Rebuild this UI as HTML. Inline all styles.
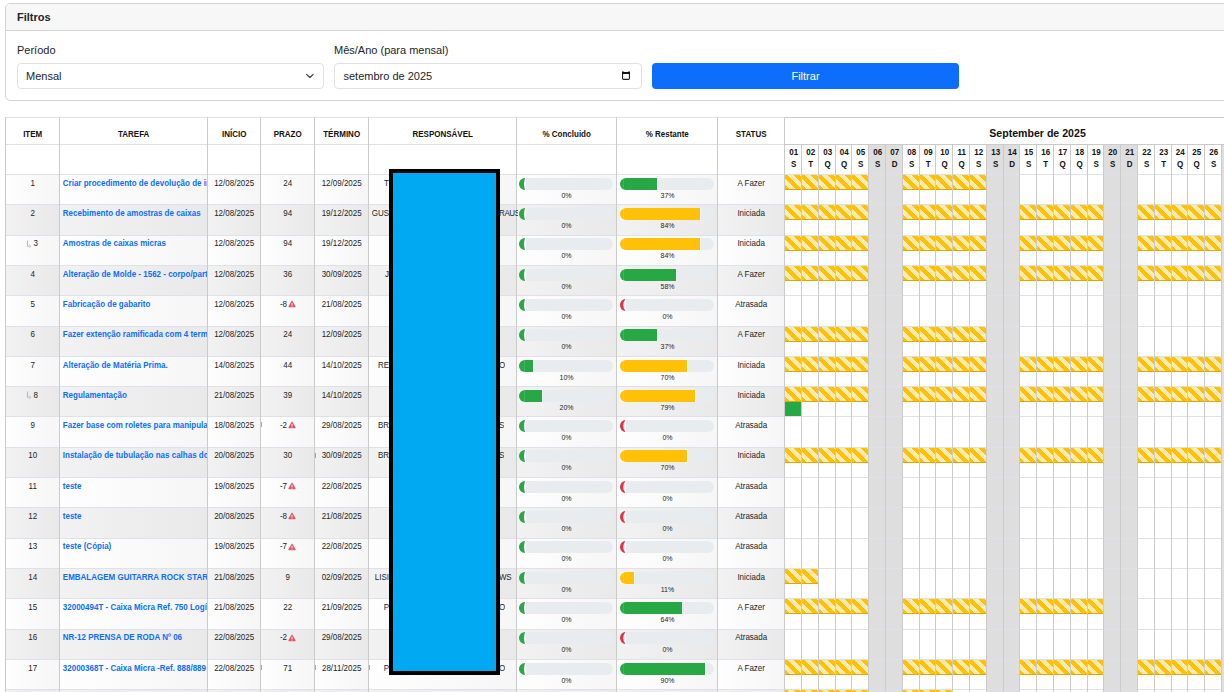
<!DOCTYPE html><html><head><meta charset="utf-8"><style>
*{box-sizing:border-box;margin:0;padding:0}
html,body{width:1224px;height:692px;overflow:hidden;background:#fff;font-family:"Liberation Sans",sans-serif;color:#212529}
.a{position:absolute;white-space:nowrap}
.vl{position:absolute;width:1px;background:#cbcbcb}
.hl{position:absolute;height:1px;background:#dee2e6}
.t8{font-size:8px;line-height:12px}
.b{font-weight:bold}
.c{text-align:center}
.lnk{color:#0d6efd;font-weight:bold}
.pct{font-size:7px;line-height:12px;text-align:center;color:#212529}
.bar{position:absolute;height:12px;background:#e9ecef;border-radius:6px}
.hat{position:absolute;height:15px;border-bottom:1px solid #e0a800;background-color:#ffc107;background-image:linear-gradient(45deg,#ffc107 12.5%,#ffeab0 12.5%,#ffeab0 37.5%,#ffc107 37.5%,#ffc107 62.5%,#ffeab0 62.5%,#ffeab0 87.5%,#ffc107 87.5%);background-size:12px 12px}
.wk{position:absolute;background:#dedede}
</style></head><body>

<div class="a" style="left:5px;top:3px;width:1300px;height:98px;border:1px solid #d3d3d3;border-radius:5px;overflow:hidden">
<div class="a" style="left:0;top:0;width:1300px;height:27px;background:#f7f7f7;border-bottom:1px solid #d3d3d3"></div>
</div>
<div class="a" style="left:17px;top:8.74px;font-size:11px;line-height:16.5px;font-weight:bold;">Filtros</div>
<div class="a" style="left:17px;top:41.64px;font-size:11px;line-height:16.5px;">Período</div>
<div class="a" style="left:334px;top:41.64px;font-size:11px;line-height:16.5px;">Mês/Ano (para mensal)</div>
<div class="a" style="left:17px;top:63px;width:307px;height:26px;border:1px solid #dee2e6;border-radius:4px;background:#fff"></div>
<div class="a" style="left:26px;top:67.64px;font-size:11px;line-height:16.5px;">Mensal</div>
<svg class="a" style="left:305px;top:72px" width="10" height="8" viewBox="0 0 10 8"><path d="M1.6 2.4 L4.9 5.5 L8.2 2.4" fill="none" stroke="#343a40" stroke-width="1.15" stroke-linecap="round" stroke-linejoin="round"/></svg>
<div class="a" style="left:334px;top:63px;width:308px;height:26px;border:1px solid #dee2e6;border-radius:4px;background:#fff"></div>
<div class="a" style="left:343.5px;top:67.64px;font-size:11px;line-height:16.5px;">setembro de 2025</div>
<svg class="a" style="left:621px;top:70px" width="10" height="11" viewBox="0 0 10 11"><rect x="1.55" y="2.6" width="6.9" height="6.8" rx="1.1" fill="none" stroke="#222" stroke-width="1.1"/><path d="M1 2 Q1.2 1 2.3 1.2 L2.8 2 L7.2 2 L7.7 1.2 Q8.8 1 9 2 L9 3.9 L1 3.9 Z" fill="#111"/></svg>
<div class="a" style="left:652px;top:63px;width:307px;height:26px;background:#0d6efd;border-radius:4px"></div>
<div class="a" style="left:652px;top:67.84px;font-size:11px;line-height:16.5px;color:#fff;width:307px;text-align:center;">Filtrar</div>
<div class="wk" style="left:868px;top:144px;width:17px;height:550px"></div>
<div class="wk" style="left:885px;top:144px;width:17px;height:550px"></div>
<div class="wk" style="left:986px;top:144px;width:17px;height:550px"></div>
<div class="wk" style="left:1003px;top:144px;width:16px;height:550px"></div>
<div class="wk" style="left:1103px;top:144px;width:17px;height:550px"></div>
<div class="wk" style="left:1120px;top:144px;width:17px;height:550px"></div>
<div class="wk" style="left:1221px;top:144px;width:17px;height:550px"></div>
<div class="wk" style="left:1238px;top:144px;width:17px;height:550px"></div>
<div class="a" style="left:5px;top:174px;width:54px;height:30px;background:linear-gradient(90deg,#fefefe,#f6f6f6)"></div>
<div class="a" style="left:59px;top:174px;width:148px;height:30px;background:linear-gradient(90deg,#fefefe,#f6f6f6)"></div>
<div class="a" style="left:207px;top:174px;width:53px;height:30px;background:linear-gradient(90deg,#fefefe,#f6f6f6)"></div>
<div class="a" style="left:260px;top:174px;width:54px;height:30px;background:linear-gradient(90deg,#fefefe,#f6f6f6)"></div>
<div class="a" style="left:314px;top:174px;width:54px;height:30px;background:linear-gradient(90deg,#fefefe,#f6f6f6)"></div>
<div class="a" style="left:368px;top:174px;width:148px;height:30px;background:linear-gradient(90deg,#fefefe,#f6f6f6)"></div>
<div class="a" style="left:516px;top:174px;width:100px;height:30px;background:linear-gradient(90deg,#fefefe,#f6f6f6)"></div>
<div class="a" style="left:616px;top:174px;width:101px;height:30px;background:linear-gradient(90deg,#fefefe,#f6f6f6)"></div>
<div class="a" style="left:717px;top:174px;width:67px;height:30px;background:linear-gradient(90deg,#fefefe,#f6f6f6)"></div>
<div class="a" style="left:5px;top:204px;width:54px;height:31px;background:linear-gradient(90deg,#f2f2f2,#e9e9e9)"></div>
<div class="a" style="left:59px;top:204px;width:148px;height:31px;background:linear-gradient(90deg,#f2f2f2,#e9e9e9)"></div>
<div class="a" style="left:207px;top:204px;width:53px;height:31px;background:linear-gradient(90deg,#f2f2f2,#e9e9e9)"></div>
<div class="a" style="left:260px;top:204px;width:54px;height:31px;background:linear-gradient(90deg,#f2f2f2,#e9e9e9)"></div>
<div class="a" style="left:314px;top:204px;width:54px;height:31px;background:linear-gradient(90deg,#f2f2f2,#e9e9e9)"></div>
<div class="a" style="left:368px;top:204px;width:148px;height:31px;background:linear-gradient(90deg,#f2f2f2,#e9e9e9)"></div>
<div class="a" style="left:516px;top:204px;width:100px;height:31px;background:linear-gradient(90deg,#f2f2f2,#e9e9e9)"></div>
<div class="a" style="left:616px;top:204px;width:101px;height:31px;background:linear-gradient(90deg,#f2f2f2,#e9e9e9)"></div>
<div class="a" style="left:717px;top:204px;width:67px;height:31px;background:linear-gradient(90deg,#f2f2f2,#e9e9e9)"></div>
<div class="a" style="left:5px;top:235px;width:54px;height:30px;background:linear-gradient(90deg,#fefefe,#f6f6f6)"></div>
<div class="a" style="left:59px;top:235px;width:148px;height:30px;background:linear-gradient(90deg,#fefefe,#f6f6f6)"></div>
<div class="a" style="left:207px;top:235px;width:53px;height:30px;background:linear-gradient(90deg,#fefefe,#f6f6f6)"></div>
<div class="a" style="left:260px;top:235px;width:54px;height:30px;background:linear-gradient(90deg,#fefefe,#f6f6f6)"></div>
<div class="a" style="left:314px;top:235px;width:54px;height:30px;background:linear-gradient(90deg,#fefefe,#f6f6f6)"></div>
<div class="a" style="left:368px;top:235px;width:148px;height:30px;background:linear-gradient(90deg,#fefefe,#f6f6f6)"></div>
<div class="a" style="left:516px;top:235px;width:100px;height:30px;background:linear-gradient(90deg,#fefefe,#f6f6f6)"></div>
<div class="a" style="left:616px;top:235px;width:101px;height:30px;background:linear-gradient(90deg,#fefefe,#f6f6f6)"></div>
<div class="a" style="left:717px;top:235px;width:67px;height:30px;background:linear-gradient(90deg,#fefefe,#f6f6f6)"></div>
<div class="a" style="left:5px;top:265px;width:54px;height:30px;background:linear-gradient(90deg,#f2f2f2,#e9e9e9)"></div>
<div class="a" style="left:59px;top:265px;width:148px;height:30px;background:linear-gradient(90deg,#f2f2f2,#e9e9e9)"></div>
<div class="a" style="left:207px;top:265px;width:53px;height:30px;background:linear-gradient(90deg,#f2f2f2,#e9e9e9)"></div>
<div class="a" style="left:260px;top:265px;width:54px;height:30px;background:linear-gradient(90deg,#f2f2f2,#e9e9e9)"></div>
<div class="a" style="left:314px;top:265px;width:54px;height:30px;background:linear-gradient(90deg,#f2f2f2,#e9e9e9)"></div>
<div class="a" style="left:368px;top:265px;width:148px;height:30px;background:linear-gradient(90deg,#f2f2f2,#e9e9e9)"></div>
<div class="a" style="left:516px;top:265px;width:100px;height:30px;background:linear-gradient(90deg,#f2f2f2,#e9e9e9)"></div>
<div class="a" style="left:616px;top:265px;width:101px;height:30px;background:linear-gradient(90deg,#f2f2f2,#e9e9e9)"></div>
<div class="a" style="left:717px;top:265px;width:67px;height:30px;background:linear-gradient(90deg,#f2f2f2,#e9e9e9)"></div>
<div class="a" style="left:5px;top:295px;width:54px;height:31px;background:linear-gradient(90deg,#fefefe,#f6f6f6)"></div>
<div class="a" style="left:59px;top:295px;width:148px;height:31px;background:linear-gradient(90deg,#fefefe,#f6f6f6)"></div>
<div class="a" style="left:207px;top:295px;width:53px;height:31px;background:linear-gradient(90deg,#fefefe,#f6f6f6)"></div>
<div class="a" style="left:260px;top:295px;width:54px;height:31px;background:linear-gradient(90deg,#fefefe,#f6f6f6)"></div>
<div class="a" style="left:314px;top:295px;width:54px;height:31px;background:linear-gradient(90deg,#fefefe,#f6f6f6)"></div>
<div class="a" style="left:368px;top:295px;width:148px;height:31px;background:linear-gradient(90deg,#fefefe,#f6f6f6)"></div>
<div class="a" style="left:516px;top:295px;width:100px;height:31px;background:linear-gradient(90deg,#fefefe,#f6f6f6)"></div>
<div class="a" style="left:616px;top:295px;width:101px;height:31px;background:linear-gradient(90deg,#fefefe,#f6f6f6)"></div>
<div class="a" style="left:717px;top:295px;width:67px;height:31px;background:linear-gradient(90deg,#fefefe,#f6f6f6)"></div>
<div class="a" style="left:5px;top:326px;width:54px;height:30px;background:linear-gradient(90deg,#f2f2f2,#e9e9e9)"></div>
<div class="a" style="left:59px;top:326px;width:148px;height:30px;background:linear-gradient(90deg,#f2f2f2,#e9e9e9)"></div>
<div class="a" style="left:207px;top:326px;width:53px;height:30px;background:linear-gradient(90deg,#f2f2f2,#e9e9e9)"></div>
<div class="a" style="left:260px;top:326px;width:54px;height:30px;background:linear-gradient(90deg,#f2f2f2,#e9e9e9)"></div>
<div class="a" style="left:314px;top:326px;width:54px;height:30px;background:linear-gradient(90deg,#f2f2f2,#e9e9e9)"></div>
<div class="a" style="left:368px;top:326px;width:148px;height:30px;background:linear-gradient(90deg,#f2f2f2,#e9e9e9)"></div>
<div class="a" style="left:516px;top:326px;width:100px;height:30px;background:linear-gradient(90deg,#f2f2f2,#e9e9e9)"></div>
<div class="a" style="left:616px;top:326px;width:101px;height:30px;background:linear-gradient(90deg,#f2f2f2,#e9e9e9)"></div>
<div class="a" style="left:717px;top:326px;width:67px;height:30px;background:linear-gradient(90deg,#f2f2f2,#e9e9e9)"></div>
<div class="a" style="left:5px;top:356px;width:54px;height:30px;background:linear-gradient(90deg,#fefefe,#f6f6f6)"></div>
<div class="a" style="left:59px;top:356px;width:148px;height:30px;background:linear-gradient(90deg,#fefefe,#f6f6f6)"></div>
<div class="a" style="left:207px;top:356px;width:53px;height:30px;background:linear-gradient(90deg,#fefefe,#f6f6f6)"></div>
<div class="a" style="left:260px;top:356px;width:54px;height:30px;background:linear-gradient(90deg,#fefefe,#f6f6f6)"></div>
<div class="a" style="left:314px;top:356px;width:54px;height:30px;background:linear-gradient(90deg,#fefefe,#f6f6f6)"></div>
<div class="a" style="left:368px;top:356px;width:148px;height:30px;background:linear-gradient(90deg,#fefefe,#f6f6f6)"></div>
<div class="a" style="left:516px;top:356px;width:100px;height:30px;background:linear-gradient(90deg,#fefefe,#f6f6f6)"></div>
<div class="a" style="left:616px;top:356px;width:101px;height:30px;background:linear-gradient(90deg,#fefefe,#f6f6f6)"></div>
<div class="a" style="left:717px;top:356px;width:67px;height:30px;background:linear-gradient(90deg,#fefefe,#f6f6f6)"></div>
<div class="a" style="left:5px;top:386px;width:54px;height:30px;background:linear-gradient(90deg,#f2f2f2,#e9e9e9)"></div>
<div class="a" style="left:59px;top:386px;width:148px;height:30px;background:linear-gradient(90deg,#f2f2f2,#e9e9e9)"></div>
<div class="a" style="left:207px;top:386px;width:53px;height:30px;background:linear-gradient(90deg,#f2f2f2,#e9e9e9)"></div>
<div class="a" style="left:260px;top:386px;width:54px;height:30px;background:linear-gradient(90deg,#f2f2f2,#e9e9e9)"></div>
<div class="a" style="left:314px;top:386px;width:54px;height:30px;background:linear-gradient(90deg,#f2f2f2,#e9e9e9)"></div>
<div class="a" style="left:368px;top:386px;width:148px;height:30px;background:linear-gradient(90deg,#f2f2f2,#e9e9e9)"></div>
<div class="a" style="left:516px;top:386px;width:100px;height:30px;background:linear-gradient(90deg,#f2f2f2,#e9e9e9)"></div>
<div class="a" style="left:616px;top:386px;width:101px;height:30px;background:linear-gradient(90deg,#f2f2f2,#e9e9e9)"></div>
<div class="a" style="left:717px;top:386px;width:67px;height:30px;background:linear-gradient(90deg,#f2f2f2,#e9e9e9)"></div>
<div class="a" style="left:5px;top:416px;width:54px;height:31px;background:linear-gradient(90deg,#fefefe,#f6f6f6)"></div>
<div class="a" style="left:59px;top:416px;width:148px;height:31px;background:linear-gradient(90deg,#fefefe,#f6f6f6)"></div>
<div class="a" style="left:207px;top:416px;width:53px;height:31px;background:linear-gradient(90deg,#fefefe,#f6f6f6)"></div>
<div class="a" style="left:260px;top:416px;width:54px;height:31px;background:linear-gradient(90deg,#fefefe,#f6f6f6)"></div>
<div class="a" style="left:314px;top:416px;width:54px;height:31px;background:linear-gradient(90deg,#fefefe,#f6f6f6)"></div>
<div class="a" style="left:368px;top:416px;width:148px;height:31px;background:linear-gradient(90deg,#fefefe,#f6f6f6)"></div>
<div class="a" style="left:516px;top:416px;width:100px;height:31px;background:linear-gradient(90deg,#fefefe,#f6f6f6)"></div>
<div class="a" style="left:616px;top:416px;width:101px;height:31px;background:linear-gradient(90deg,#fefefe,#f6f6f6)"></div>
<div class="a" style="left:717px;top:416px;width:67px;height:31px;background:linear-gradient(90deg,#fefefe,#f6f6f6)"></div>
<div class="a" style="left:5px;top:447px;width:54px;height:30px;background:linear-gradient(90deg,#f2f2f2,#e9e9e9)"></div>
<div class="a" style="left:59px;top:447px;width:148px;height:30px;background:linear-gradient(90deg,#f2f2f2,#e9e9e9)"></div>
<div class="a" style="left:207px;top:447px;width:53px;height:30px;background:linear-gradient(90deg,#f2f2f2,#e9e9e9)"></div>
<div class="a" style="left:260px;top:447px;width:54px;height:30px;background:linear-gradient(90deg,#f2f2f2,#e9e9e9)"></div>
<div class="a" style="left:314px;top:447px;width:54px;height:30px;background:linear-gradient(90deg,#f2f2f2,#e9e9e9)"></div>
<div class="a" style="left:368px;top:447px;width:148px;height:30px;background:linear-gradient(90deg,#f2f2f2,#e9e9e9)"></div>
<div class="a" style="left:516px;top:447px;width:100px;height:30px;background:linear-gradient(90deg,#f2f2f2,#e9e9e9)"></div>
<div class="a" style="left:616px;top:447px;width:101px;height:30px;background:linear-gradient(90deg,#f2f2f2,#e9e9e9)"></div>
<div class="a" style="left:717px;top:447px;width:67px;height:30px;background:linear-gradient(90deg,#f2f2f2,#e9e9e9)"></div>
<div class="a" style="left:5px;top:477px;width:54px;height:30px;background:linear-gradient(90deg,#fefefe,#f6f6f6)"></div>
<div class="a" style="left:59px;top:477px;width:148px;height:30px;background:linear-gradient(90deg,#fefefe,#f6f6f6)"></div>
<div class="a" style="left:207px;top:477px;width:53px;height:30px;background:linear-gradient(90deg,#fefefe,#f6f6f6)"></div>
<div class="a" style="left:260px;top:477px;width:54px;height:30px;background:linear-gradient(90deg,#fefefe,#f6f6f6)"></div>
<div class="a" style="left:314px;top:477px;width:54px;height:30px;background:linear-gradient(90deg,#fefefe,#f6f6f6)"></div>
<div class="a" style="left:368px;top:477px;width:148px;height:30px;background:linear-gradient(90deg,#fefefe,#f6f6f6)"></div>
<div class="a" style="left:516px;top:477px;width:100px;height:30px;background:linear-gradient(90deg,#fefefe,#f6f6f6)"></div>
<div class="a" style="left:616px;top:477px;width:101px;height:30px;background:linear-gradient(90deg,#fefefe,#f6f6f6)"></div>
<div class="a" style="left:717px;top:477px;width:67px;height:30px;background:linear-gradient(90deg,#fefefe,#f6f6f6)"></div>
<div class="a" style="left:5px;top:507px;width:54px;height:31px;background:linear-gradient(90deg,#f2f2f2,#e9e9e9)"></div>
<div class="a" style="left:59px;top:507px;width:148px;height:31px;background:linear-gradient(90deg,#f2f2f2,#e9e9e9)"></div>
<div class="a" style="left:207px;top:507px;width:53px;height:31px;background:linear-gradient(90deg,#f2f2f2,#e9e9e9)"></div>
<div class="a" style="left:260px;top:507px;width:54px;height:31px;background:linear-gradient(90deg,#f2f2f2,#e9e9e9)"></div>
<div class="a" style="left:314px;top:507px;width:54px;height:31px;background:linear-gradient(90deg,#f2f2f2,#e9e9e9)"></div>
<div class="a" style="left:368px;top:507px;width:148px;height:31px;background:linear-gradient(90deg,#f2f2f2,#e9e9e9)"></div>
<div class="a" style="left:516px;top:507px;width:100px;height:31px;background:linear-gradient(90deg,#f2f2f2,#e9e9e9)"></div>
<div class="a" style="left:616px;top:507px;width:101px;height:31px;background:linear-gradient(90deg,#f2f2f2,#e9e9e9)"></div>
<div class="a" style="left:717px;top:507px;width:67px;height:31px;background:linear-gradient(90deg,#f2f2f2,#e9e9e9)"></div>
<div class="a" style="left:5px;top:538px;width:54px;height:30px;background:linear-gradient(90deg,#fefefe,#f6f6f6)"></div>
<div class="a" style="left:59px;top:538px;width:148px;height:30px;background:linear-gradient(90deg,#fefefe,#f6f6f6)"></div>
<div class="a" style="left:207px;top:538px;width:53px;height:30px;background:linear-gradient(90deg,#fefefe,#f6f6f6)"></div>
<div class="a" style="left:260px;top:538px;width:54px;height:30px;background:linear-gradient(90deg,#fefefe,#f6f6f6)"></div>
<div class="a" style="left:314px;top:538px;width:54px;height:30px;background:linear-gradient(90deg,#fefefe,#f6f6f6)"></div>
<div class="a" style="left:368px;top:538px;width:148px;height:30px;background:linear-gradient(90deg,#fefefe,#f6f6f6)"></div>
<div class="a" style="left:516px;top:538px;width:100px;height:30px;background:linear-gradient(90deg,#fefefe,#f6f6f6)"></div>
<div class="a" style="left:616px;top:538px;width:101px;height:30px;background:linear-gradient(90deg,#fefefe,#f6f6f6)"></div>
<div class="a" style="left:717px;top:538px;width:67px;height:30px;background:linear-gradient(90deg,#fefefe,#f6f6f6)"></div>
<div class="a" style="left:5px;top:568px;width:54px;height:30px;background:linear-gradient(90deg,#f2f2f2,#e9e9e9)"></div>
<div class="a" style="left:59px;top:568px;width:148px;height:30px;background:linear-gradient(90deg,#f2f2f2,#e9e9e9)"></div>
<div class="a" style="left:207px;top:568px;width:53px;height:30px;background:linear-gradient(90deg,#f2f2f2,#e9e9e9)"></div>
<div class="a" style="left:260px;top:568px;width:54px;height:30px;background:linear-gradient(90deg,#f2f2f2,#e9e9e9)"></div>
<div class="a" style="left:314px;top:568px;width:54px;height:30px;background:linear-gradient(90deg,#f2f2f2,#e9e9e9)"></div>
<div class="a" style="left:368px;top:568px;width:148px;height:30px;background:linear-gradient(90deg,#f2f2f2,#e9e9e9)"></div>
<div class="a" style="left:516px;top:568px;width:100px;height:30px;background:linear-gradient(90deg,#f2f2f2,#e9e9e9)"></div>
<div class="a" style="left:616px;top:568px;width:101px;height:30px;background:linear-gradient(90deg,#f2f2f2,#e9e9e9)"></div>
<div class="a" style="left:717px;top:568px;width:67px;height:30px;background:linear-gradient(90deg,#f2f2f2,#e9e9e9)"></div>
<div class="a" style="left:5px;top:598px;width:54px;height:31px;background:linear-gradient(90deg,#fefefe,#f6f6f6)"></div>
<div class="a" style="left:59px;top:598px;width:148px;height:31px;background:linear-gradient(90deg,#fefefe,#f6f6f6)"></div>
<div class="a" style="left:207px;top:598px;width:53px;height:31px;background:linear-gradient(90deg,#fefefe,#f6f6f6)"></div>
<div class="a" style="left:260px;top:598px;width:54px;height:31px;background:linear-gradient(90deg,#fefefe,#f6f6f6)"></div>
<div class="a" style="left:314px;top:598px;width:54px;height:31px;background:linear-gradient(90deg,#fefefe,#f6f6f6)"></div>
<div class="a" style="left:368px;top:598px;width:148px;height:31px;background:linear-gradient(90deg,#fefefe,#f6f6f6)"></div>
<div class="a" style="left:516px;top:598px;width:100px;height:31px;background:linear-gradient(90deg,#fefefe,#f6f6f6)"></div>
<div class="a" style="left:616px;top:598px;width:101px;height:31px;background:linear-gradient(90deg,#fefefe,#f6f6f6)"></div>
<div class="a" style="left:717px;top:598px;width:67px;height:31px;background:linear-gradient(90deg,#fefefe,#f6f6f6)"></div>
<div class="a" style="left:5px;top:629px;width:54px;height:30px;background:linear-gradient(90deg,#f2f2f2,#e9e9e9)"></div>
<div class="a" style="left:59px;top:629px;width:148px;height:30px;background:linear-gradient(90deg,#f2f2f2,#e9e9e9)"></div>
<div class="a" style="left:207px;top:629px;width:53px;height:30px;background:linear-gradient(90deg,#f2f2f2,#e9e9e9)"></div>
<div class="a" style="left:260px;top:629px;width:54px;height:30px;background:linear-gradient(90deg,#f2f2f2,#e9e9e9)"></div>
<div class="a" style="left:314px;top:629px;width:54px;height:30px;background:linear-gradient(90deg,#f2f2f2,#e9e9e9)"></div>
<div class="a" style="left:368px;top:629px;width:148px;height:30px;background:linear-gradient(90deg,#f2f2f2,#e9e9e9)"></div>
<div class="a" style="left:516px;top:629px;width:100px;height:30px;background:linear-gradient(90deg,#f2f2f2,#e9e9e9)"></div>
<div class="a" style="left:616px;top:629px;width:101px;height:30px;background:linear-gradient(90deg,#f2f2f2,#e9e9e9)"></div>
<div class="a" style="left:717px;top:629px;width:67px;height:30px;background:linear-gradient(90deg,#f2f2f2,#e9e9e9)"></div>
<div class="a" style="left:5px;top:659px;width:54px;height:30px;background:linear-gradient(90deg,#fefefe,#f6f6f6)"></div>
<div class="a" style="left:59px;top:659px;width:148px;height:30px;background:linear-gradient(90deg,#fefefe,#f6f6f6)"></div>
<div class="a" style="left:207px;top:659px;width:53px;height:30px;background:linear-gradient(90deg,#fefefe,#f6f6f6)"></div>
<div class="a" style="left:260px;top:659px;width:54px;height:30px;background:linear-gradient(90deg,#fefefe,#f6f6f6)"></div>
<div class="a" style="left:314px;top:659px;width:54px;height:30px;background:linear-gradient(90deg,#fefefe,#f6f6f6)"></div>
<div class="a" style="left:368px;top:659px;width:148px;height:30px;background:linear-gradient(90deg,#fefefe,#f6f6f6)"></div>
<div class="a" style="left:516px;top:659px;width:100px;height:30px;background:linear-gradient(90deg,#fefefe,#f6f6f6)"></div>
<div class="a" style="left:616px;top:659px;width:101px;height:30px;background:linear-gradient(90deg,#fefefe,#f6f6f6)"></div>
<div class="a" style="left:717px;top:659px;width:67px;height:30px;background:linear-gradient(90deg,#fefefe,#f6f6f6)"></div>
<div class="a" style="left:5px;top:689px;width:54px;height:30px;background:linear-gradient(90deg,#f2f2f2,#e9e9e9)"></div>
<div class="a" style="left:59px;top:689px;width:148px;height:30px;background:linear-gradient(90deg,#f2f2f2,#e9e9e9)"></div>
<div class="a" style="left:207px;top:689px;width:53px;height:30px;background:linear-gradient(90deg,#f2f2f2,#e9e9e9)"></div>
<div class="a" style="left:260px;top:689px;width:54px;height:30px;background:linear-gradient(90deg,#f2f2f2,#e9e9e9)"></div>
<div class="a" style="left:314px;top:689px;width:54px;height:30px;background:linear-gradient(90deg,#f2f2f2,#e9e9e9)"></div>
<div class="a" style="left:368px;top:689px;width:148px;height:30px;background:linear-gradient(90deg,#f2f2f2,#e9e9e9)"></div>
<div class="a" style="left:516px;top:689px;width:100px;height:30px;background:linear-gradient(90deg,#f2f2f2,#e9e9e9)"></div>
<div class="a" style="left:616px;top:689px;width:101px;height:30px;background:linear-gradient(90deg,#f2f2f2,#e9e9e9)"></div>
<div class="a" style="left:717px;top:689px;width:67px;height:30px;background:linear-gradient(90deg,#f2f2f2,#e9e9e9)"></div>
<div class="hl" style="left:5px;top:117px;width:1224px"></div>
<div class="hl" style="left:5px;top:144px;width:1224px"></div>
<div class="hl" style="left:5px;top:174px;width:1224px"></div>
<div class="hl" style="left:5px;top:204px;width:1224px"></div>
<div class="hl" style="left:5px;top:235px;width:1224px"></div>
<div class="hl" style="left:5px;top:265px;width:1224px"></div>
<div class="hl" style="left:5px;top:295px;width:1224px"></div>
<div class="hl" style="left:5px;top:326px;width:1224px"></div>
<div class="hl" style="left:5px;top:356px;width:1224px"></div>
<div class="hl" style="left:5px;top:386px;width:1224px"></div>
<div class="hl" style="left:5px;top:416px;width:1224px"></div>
<div class="hl" style="left:5px;top:447px;width:1224px"></div>
<div class="hl" style="left:5px;top:477px;width:1224px"></div>
<div class="hl" style="left:5px;top:507px;width:1224px"></div>
<div class="hl" style="left:5px;top:538px;width:1224px"></div>
<div class="hl" style="left:5px;top:568px;width:1224px"></div>
<div class="hl" style="left:5px;top:598px;width:1224px"></div>
<div class="hl" style="left:5px;top:629px;width:1224px"></div>
<div class="hl" style="left:5px;top:659px;width:1224px"></div>
<div class="hl" style="left:5px;top:689px;width:1224px"></div>
<div class="hl" style="left:5px;top:719px;width:1224px"></div>
<div class="a" style="left:784px;top:117px;width:1224px;height:1px;background:#cbcbcb"></div>
<div class="a" style="left:784px;top:144px;width:1224px;height:1px;background:#cbcbcb"></div>
<div class="vl" style="left:5px;top:117px;height:577px"></div>
<div class="vl" style="left:59px;top:117px;height:577px"></div>
<div class="vl" style="left:207px;top:117px;height:577px"></div>
<div class="vl" style="left:260px;top:117px;height:577px"></div>
<div class="vl" style="left:314px;top:117px;height:577px"></div>
<div class="vl" style="left:368px;top:117px;height:577px"></div>
<div class="vl" style="left:516px;top:117px;height:577px"></div>
<div class="vl" style="left:616px;top:117px;height:577px"></div>
<div class="vl" style="left:717px;top:117px;height:577px"></div>
<div class="vl" style="left:784px;top:117px;height:577px"></div>
<div class="vl" style="left:801px;top:144px;height:550px"></div>
<div class="vl" style="left:818px;top:144px;height:550px"></div>
<div class="vl" style="left:835px;top:144px;height:550px"></div>
<div class="vl" style="left:851px;top:144px;height:550px"></div>
<div class="vl" style="left:868px;top:144px;height:550px"></div>
<div class="vl" style="left:885px;top:144px;height:550px"></div>
<div class="vl" style="left:902px;top:144px;height:550px"></div>
<div class="vl" style="left:919px;top:144px;height:550px"></div>
<div class="vl" style="left:935px;top:144px;height:550px"></div>
<div class="vl" style="left:952px;top:144px;height:550px"></div>
<div class="vl" style="left:969px;top:144px;height:550px"></div>
<div class="vl" style="left:986px;top:144px;height:550px"></div>
<div class="vl" style="left:1003px;top:144px;height:550px"></div>
<div class="vl" style="left:1019px;top:144px;height:550px"></div>
<div class="vl" style="left:1036px;top:144px;height:550px"></div>
<div class="vl" style="left:1053px;top:144px;height:550px"></div>
<div class="vl" style="left:1070px;top:144px;height:550px"></div>
<div class="vl" style="left:1087px;top:144px;height:550px"></div>
<div class="vl" style="left:1103px;top:144px;height:550px"></div>
<div class="vl" style="left:1120px;top:144px;height:550px"></div>
<div class="vl" style="left:1137px;top:144px;height:550px"></div>
<div class="vl" style="left:1154px;top:144px;height:550px"></div>
<div class="vl" style="left:1171px;top:144px;height:550px"></div>
<div class="vl" style="left:1187px;top:144px;height:550px"></div>
<div class="vl" style="left:1204px;top:144px;height:550px"></div>
<div class="vl" style="left:1221px;top:144px;height:550px"></div>
<div class="vl" style="left:1238px;top:144px;height:550px"></div>
<div class="vl" style="left:1255px;top:144px;height:550px"></div>
<div class="vl" style="left:1271px;top:144px;height:550px"></div>
<div class="vl" style="left:1288px;top:144px;height:550px"></div>
<div class="a" style="left:5.7px;top:128.23px;font-size:8px;line-height:12.0px;transform:scaleY(1.2);transform-origin:50% 2.94px;font-weight:bold;color:#111;width:54px;text-align:center;">ITEM</div>
<div class="a" style="left:59.7px;top:128.23px;font-size:8px;line-height:12.0px;transform:scaleY(1.2);transform-origin:50% 2.94px;font-weight:bold;color:#111;width:148px;text-align:center;">TAREFA</div>
<div class="a" style="left:207.7px;top:128.23px;font-size:8px;line-height:12.0px;transform:scaleY(1.2);transform-origin:50% 2.94px;font-weight:bold;color:#111;width:53px;text-align:center;">INÍCIO</div>
<div class="a" style="left:260.7px;top:128.23px;font-size:8px;line-height:12.0px;transform:scaleY(1.2);transform-origin:50% 2.94px;font-weight:bold;color:#111;width:54px;text-align:center;">PRAZO</div>
<div class="a" style="left:314.7px;top:128.23px;font-size:8px;line-height:12.0px;transform:scaleY(1.2);transform-origin:50% 2.94px;font-weight:bold;color:#111;width:54px;text-align:center;">TÉRMINO</div>
<div class="a" style="left:368.7px;top:128.23px;font-size:8px;line-height:12.0px;transform:scaleY(1.2);transform-origin:50% 2.94px;font-weight:bold;color:#111;width:148px;text-align:center;">RESPONSÁVEL</div>
<div class="a" style="left:516.7px;top:128.23px;font-size:8px;line-height:12.0px;transform:scaleY(1.2);transform-origin:50% 2.94px;font-weight:bold;color:#111;width:100px;text-align:center;">% Concluido</div>
<div class="a" style="left:616.7px;top:128.23px;font-size:8px;line-height:12.0px;transform:scaleY(1.2);transform-origin:50% 2.94px;font-weight:bold;color:#111;width:101px;text-align:center;">% Restante</div>
<div class="a" style="left:717.7px;top:128.23px;font-size:8px;line-height:12.0px;transform:scaleY(1.2);transform-origin:50% 2.94px;font-weight:bold;color:#111;width:67px;text-align:center;">STATUS</div>
<div class="a" style="left:785.5px;top:125.68px;font-size:10.6px;line-height:15.9px;font-weight:bold;color:#111;width:504px;text-align:center;">September de 2025</div>
<div class="a" style="left:784.7px;top:145.83px;font-size:8px;line-height:12.0px;transform:scaleY(1.2);transform-origin:50% 2.94px;font-weight:bold;color:#111;width:18px;text-align:center;">01</div>
<div class="a" style="left:784.7px;top:157.73px;font-size:8px;line-height:12.0px;transform:scaleY(1.2);transform-origin:50% 2.94px;font-weight:bold;color:#111;width:18px;text-align:center;">S</div>
<div class="a" style="left:801.7px;top:145.83px;font-size:8px;line-height:12.0px;transform:scaleY(1.2);transform-origin:50% 2.94px;font-weight:bold;color:#111;width:18px;text-align:center;">02</div>
<div class="a" style="left:801.7px;top:157.73px;font-size:8px;line-height:12.0px;transform:scaleY(1.2);transform-origin:50% 2.94px;font-weight:bold;color:#111;width:18px;text-align:center;">T</div>
<div class="a" style="left:818.7px;top:145.83px;font-size:8px;line-height:12.0px;transform:scaleY(1.2);transform-origin:50% 2.94px;font-weight:bold;color:#111;width:18px;text-align:center;">03</div>
<div class="a" style="left:818.7px;top:157.73px;font-size:8px;line-height:12.0px;transform:scaleY(1.2);transform-origin:50% 2.94px;font-weight:bold;color:#111;width:18px;text-align:center;">Q</div>
<div class="a" style="left:835.7px;top:145.83px;font-size:8px;line-height:12.0px;transform:scaleY(1.2);transform-origin:50% 2.94px;font-weight:bold;color:#111;width:17px;text-align:center;">04</div>
<div class="a" style="left:835.7px;top:157.73px;font-size:8px;line-height:12.0px;transform:scaleY(1.2);transform-origin:50% 2.94px;font-weight:bold;color:#111;width:17px;text-align:center;">Q</div>
<div class="a" style="left:851.7px;top:145.83px;font-size:8px;line-height:12.0px;transform:scaleY(1.2);transform-origin:50% 2.94px;font-weight:bold;color:#111;width:18px;text-align:center;">05</div>
<div class="a" style="left:851.7px;top:157.73px;font-size:8px;line-height:12.0px;transform:scaleY(1.2);transform-origin:50% 2.94px;font-weight:bold;color:#111;width:18px;text-align:center;">S</div>
<div class="a" style="left:868.7px;top:145.83px;font-size:8px;line-height:12.0px;transform:scaleY(1.2);transform-origin:50% 2.94px;font-weight:bold;color:#111;width:18px;text-align:center;">06</div>
<div class="a" style="left:868.7px;top:157.73px;font-size:8px;line-height:12.0px;transform:scaleY(1.2);transform-origin:50% 2.94px;font-weight:bold;color:#111;width:18px;text-align:center;">S</div>
<div class="a" style="left:885.7px;top:145.83px;font-size:8px;line-height:12.0px;transform:scaleY(1.2);transform-origin:50% 2.94px;font-weight:bold;color:#111;width:18px;text-align:center;">07</div>
<div class="a" style="left:885.7px;top:157.73px;font-size:8px;line-height:12.0px;transform:scaleY(1.2);transform-origin:50% 2.94px;font-weight:bold;color:#111;width:18px;text-align:center;">D</div>
<div class="a" style="left:902.7px;top:145.83px;font-size:8px;line-height:12.0px;transform:scaleY(1.2);transform-origin:50% 2.94px;font-weight:bold;color:#111;width:18px;text-align:center;">08</div>
<div class="a" style="left:902.7px;top:157.73px;font-size:8px;line-height:12.0px;transform:scaleY(1.2);transform-origin:50% 2.94px;font-weight:bold;color:#111;width:18px;text-align:center;">S</div>
<div class="a" style="left:919.7px;top:145.83px;font-size:8px;line-height:12.0px;transform:scaleY(1.2);transform-origin:50% 2.94px;font-weight:bold;color:#111;width:17px;text-align:center;">09</div>
<div class="a" style="left:919.7px;top:157.73px;font-size:8px;line-height:12.0px;transform:scaleY(1.2);transform-origin:50% 2.94px;font-weight:bold;color:#111;width:17px;text-align:center;">T</div>
<div class="a" style="left:935.7px;top:145.83px;font-size:8px;line-height:12.0px;transform:scaleY(1.2);transform-origin:50% 2.94px;font-weight:bold;color:#111;width:18px;text-align:center;">10</div>
<div class="a" style="left:935.7px;top:157.73px;font-size:8px;line-height:12.0px;transform:scaleY(1.2);transform-origin:50% 2.94px;font-weight:bold;color:#111;width:18px;text-align:center;">Q</div>
<div class="a" style="left:952.7px;top:145.83px;font-size:8px;line-height:12.0px;transform:scaleY(1.2);transform-origin:50% 2.94px;font-weight:bold;color:#111;width:18px;text-align:center;">11</div>
<div class="a" style="left:952.7px;top:157.73px;font-size:8px;line-height:12.0px;transform:scaleY(1.2);transform-origin:50% 2.94px;font-weight:bold;color:#111;width:18px;text-align:center;">Q</div>
<div class="a" style="left:969.7px;top:145.83px;font-size:8px;line-height:12.0px;transform:scaleY(1.2);transform-origin:50% 2.94px;font-weight:bold;color:#111;width:18px;text-align:center;">12</div>
<div class="a" style="left:969.7px;top:157.73px;font-size:8px;line-height:12.0px;transform:scaleY(1.2);transform-origin:50% 2.94px;font-weight:bold;color:#111;width:18px;text-align:center;">S</div>
<div class="a" style="left:986.7px;top:145.83px;font-size:8px;line-height:12.0px;transform:scaleY(1.2);transform-origin:50% 2.94px;font-weight:bold;color:#111;width:18px;text-align:center;">13</div>
<div class="a" style="left:986.7px;top:157.73px;font-size:8px;line-height:12.0px;transform:scaleY(1.2);transform-origin:50% 2.94px;font-weight:bold;color:#111;width:18px;text-align:center;">S</div>
<div class="a" style="left:1003.7px;top:145.83px;font-size:8px;line-height:12.0px;transform:scaleY(1.2);transform-origin:50% 2.94px;font-weight:bold;color:#111;width:17px;text-align:center;">14</div>
<div class="a" style="left:1003.7px;top:157.73px;font-size:8px;line-height:12.0px;transform:scaleY(1.2);transform-origin:50% 2.94px;font-weight:bold;color:#111;width:17px;text-align:center;">D</div>
<div class="a" style="left:1019.7px;top:145.83px;font-size:8px;line-height:12.0px;transform:scaleY(1.2);transform-origin:50% 2.94px;font-weight:bold;color:#111;width:18px;text-align:center;">15</div>
<div class="a" style="left:1019.7px;top:157.73px;font-size:8px;line-height:12.0px;transform:scaleY(1.2);transform-origin:50% 2.94px;font-weight:bold;color:#111;width:18px;text-align:center;">S</div>
<div class="a" style="left:1036.7px;top:145.83px;font-size:8px;line-height:12.0px;transform:scaleY(1.2);transform-origin:50% 2.94px;font-weight:bold;color:#111;width:18px;text-align:center;">16</div>
<div class="a" style="left:1036.7px;top:157.73px;font-size:8px;line-height:12.0px;transform:scaleY(1.2);transform-origin:50% 2.94px;font-weight:bold;color:#111;width:18px;text-align:center;">T</div>
<div class="a" style="left:1053.7px;top:145.83px;font-size:8px;line-height:12.0px;transform:scaleY(1.2);transform-origin:50% 2.94px;font-weight:bold;color:#111;width:18px;text-align:center;">17</div>
<div class="a" style="left:1053.7px;top:157.73px;font-size:8px;line-height:12.0px;transform:scaleY(1.2);transform-origin:50% 2.94px;font-weight:bold;color:#111;width:18px;text-align:center;">Q</div>
<div class="a" style="left:1070.7px;top:145.83px;font-size:8px;line-height:12.0px;transform:scaleY(1.2);transform-origin:50% 2.94px;font-weight:bold;color:#111;width:18px;text-align:center;">18</div>
<div class="a" style="left:1070.7px;top:157.73px;font-size:8px;line-height:12.0px;transform:scaleY(1.2);transform-origin:50% 2.94px;font-weight:bold;color:#111;width:18px;text-align:center;">Q</div>
<div class="a" style="left:1087.7px;top:145.83px;font-size:8px;line-height:12.0px;transform:scaleY(1.2);transform-origin:50% 2.94px;font-weight:bold;color:#111;width:17px;text-align:center;">19</div>
<div class="a" style="left:1087.7px;top:157.73px;font-size:8px;line-height:12.0px;transform:scaleY(1.2);transform-origin:50% 2.94px;font-weight:bold;color:#111;width:17px;text-align:center;">S</div>
<div class="a" style="left:1103.7px;top:145.83px;font-size:8px;line-height:12.0px;transform:scaleY(1.2);transform-origin:50% 2.94px;font-weight:bold;color:#111;width:18px;text-align:center;">20</div>
<div class="a" style="left:1103.7px;top:157.73px;font-size:8px;line-height:12.0px;transform:scaleY(1.2);transform-origin:50% 2.94px;font-weight:bold;color:#111;width:18px;text-align:center;">S</div>
<div class="a" style="left:1120.7px;top:145.83px;font-size:8px;line-height:12.0px;transform:scaleY(1.2);transform-origin:50% 2.94px;font-weight:bold;color:#111;width:18px;text-align:center;">21</div>
<div class="a" style="left:1120.7px;top:157.73px;font-size:8px;line-height:12.0px;transform:scaleY(1.2);transform-origin:50% 2.94px;font-weight:bold;color:#111;width:18px;text-align:center;">D</div>
<div class="a" style="left:1137.7px;top:145.83px;font-size:8px;line-height:12.0px;transform:scaleY(1.2);transform-origin:50% 2.94px;font-weight:bold;color:#111;width:18px;text-align:center;">22</div>
<div class="a" style="left:1137.7px;top:157.73px;font-size:8px;line-height:12.0px;transform:scaleY(1.2);transform-origin:50% 2.94px;font-weight:bold;color:#111;width:18px;text-align:center;">S</div>
<div class="a" style="left:1154.7px;top:145.83px;font-size:8px;line-height:12.0px;transform:scaleY(1.2);transform-origin:50% 2.94px;font-weight:bold;color:#111;width:18px;text-align:center;">23</div>
<div class="a" style="left:1154.7px;top:157.73px;font-size:8px;line-height:12.0px;transform:scaleY(1.2);transform-origin:50% 2.94px;font-weight:bold;color:#111;width:18px;text-align:center;">T</div>
<div class="a" style="left:1171.7px;top:145.83px;font-size:8px;line-height:12.0px;transform:scaleY(1.2);transform-origin:50% 2.94px;font-weight:bold;color:#111;width:17px;text-align:center;">24</div>
<div class="a" style="left:1171.7px;top:157.73px;font-size:8px;line-height:12.0px;transform:scaleY(1.2);transform-origin:50% 2.94px;font-weight:bold;color:#111;width:17px;text-align:center;">Q</div>
<div class="a" style="left:1187.7px;top:145.83px;font-size:8px;line-height:12.0px;transform:scaleY(1.2);transform-origin:50% 2.94px;font-weight:bold;color:#111;width:18px;text-align:center;">25</div>
<div class="a" style="left:1187.7px;top:157.73px;font-size:8px;line-height:12.0px;transform:scaleY(1.2);transform-origin:50% 2.94px;font-weight:bold;color:#111;width:18px;text-align:center;">Q</div>
<div class="a" style="left:1204.7px;top:145.83px;font-size:8px;line-height:12.0px;transform:scaleY(1.2);transform-origin:50% 2.94px;font-weight:bold;color:#111;width:18px;text-align:center;">26</div>
<div class="a" style="left:1204.7px;top:157.73px;font-size:8px;line-height:12.0px;transform:scaleY(1.2);transform-origin:50% 2.94px;font-weight:bold;color:#111;width:18px;text-align:center;">S</div>
<div class="a" style="left:1221.7px;top:145.83px;font-size:8px;line-height:12.0px;transform:scaleY(1.2);transform-origin:50% 2.94px;font-weight:bold;color:#111;width:18px;text-align:center;">27</div>
<div class="a" style="left:1221.7px;top:157.73px;font-size:8px;line-height:12.0px;transform:scaleY(1.2);transform-origin:50% 2.94px;font-weight:bold;color:#111;width:18px;text-align:center;">S</div>
<div class="a" style="left:1238.7px;top:145.83px;font-size:8px;line-height:12.0px;transform:scaleY(1.2);transform-origin:50% 2.94px;font-weight:bold;color:#111;width:18px;text-align:center;">28</div>
<div class="a" style="left:1238.7px;top:157.73px;font-size:8px;line-height:12.0px;transform:scaleY(1.2);transform-origin:50% 2.94px;font-weight:bold;color:#111;width:18px;text-align:center;">D</div>
<div class="a" style="left:1255.7px;top:145.83px;font-size:8px;line-height:12.0px;transform:scaleY(1.2);transform-origin:50% 2.94px;font-weight:bold;color:#111;width:17px;text-align:center;">29</div>
<div class="a" style="left:1255.7px;top:157.73px;font-size:8px;line-height:12.0px;transform:scaleY(1.2);transform-origin:50% 2.94px;font-weight:bold;color:#111;width:17px;text-align:center;">S</div>
<div class="a" style="left:1271.7px;top:145.83px;font-size:8px;line-height:12.0px;transform:scaleY(1.2);transform-origin:50% 2.94px;font-weight:bold;color:#111;width:18px;text-align:center;">30</div>
<div class="a" style="left:1271.7px;top:157.73px;font-size:8px;line-height:12.0px;transform:scaleY(1.2);transform-origin:50% 2.94px;font-weight:bold;color:#111;width:18px;text-align:center;">T</div>
<div class="a" style="left:5.7px;top:176.53px;font-size:8px;line-height:12.0px;transform:scaleY(1.2);transform-origin:50% 2.94px;width:54px;text-align:center;">1</div>
<div class="a" style="left:60px;top:174px;width:147px;height:30px;overflow:hidden"><div class="a" style="left:2.8px;top:2.53px;font-size:8px;line-height:12.0px;transform:scaleY(1.2);transform-origin:50% 2.94px;font-weight:bold;color:#0d6efd;">Criar procedimento de devolução de insumos</div></div>
<div class="a" style="left:207.7px;top:176.53px;font-size:8px;line-height:12.0px;transform:scaleY(1.2);transform-origin:50% 2.94px;width:53px;text-align:center;">12/08/2025</div>
<div class="a" style="left:260.7px;top:176.53px;font-size:8px;line-height:12.0px;transform:scaleY(1.2);transform-origin:50% 2.94px;width:54px;text-align:center;">24</div>
<div class="a" style="left:314.7px;top:176.53px;font-size:8px;line-height:12.0px;transform:scaleY(1.2);transform-origin:50% 2.94px;width:54px;text-align:center;">12/09/2025</div>
<div class="a" style="left:369px;top:174px;width:20px;height:30px;overflow:hidden"><div class="a" style="left:0px;top:2.53px;font-size:8px;line-height:12.0px;transform:scaleY(1.2);transform-origin:50% 2.94px;width:20px;text-align:right;">T</div></div>
<div class="bar" style="left:519px;top:178px;width:94px"></div>
<div class="a" style="left:519px;top:178px;width:7px;height:12px;background:linear-gradient(90deg,rgba(0,0,0,0) 0,rgba(0,0,0,0) 100%)"></div>
<div class="a" style="left:525px;top:178px;width:1px;height:12px;background:#fafafa"></div>
<svg class="a" style="left:519px;top:178px" width="7" height="12" viewBox="0 0 7 12"><path d="M6 0 A6 6 0 0 0 6 12 Q3.8 6 6 0 Z" fill="#28a745"/></svg>
<div class="a" style="left:519px;top:190.82px;font-size:7px;line-height:10.5px;color:#212529;width:95px;text-align:center;">0%</div>
<div class="bar" style="left:620px;top:178px;width:94px"></div>
<div class="a" style="left:620px;top:178px;width:38.1px;height:12px;background:#fafafa"></div>
<div class="a" style="left:620px;top:178px;width:37.1px;height:12px;background:#28a745;border-radius:6px 0 0 6px"></div>
<div class="a" style="left:623.2px;top:178px;width:1px;height:12px;background:rgba(255,255,255,0.12)"></div>
<div class="a" style="left:620px;top:190.82px;font-size:7px;line-height:10.5px;color:#212529;width:95px;text-align:center;">37%</div>
<div class="a" style="left:717.7px;top:176.53px;font-size:8px;line-height:12.0px;transform:scaleY(1.2);transform-origin:50% 2.94px;width:67px;text-align:center;">A Fazer</div>
<div class="hat" style="left:785px;top:175px;width:16px"></div>
<div class="hat" style="left:802px;top:175px;width:16px"></div>
<div class="hat" style="left:819px;top:175px;width:16px"></div>
<div class="hat" style="left:836px;top:175px;width:15px"></div>
<div class="hat" style="left:852px;top:175px;width:16px"></div>
<div class="hat" style="left:903px;top:175px;width:16px"></div>
<div class="hat" style="left:920px;top:175px;width:15px"></div>
<div class="hat" style="left:936px;top:175px;width:16px"></div>
<div class="hat" style="left:953px;top:175px;width:16px"></div>
<div class="hat" style="left:970px;top:175px;width:16px"></div>
<div class="a" style="left:5.7px;top:206.53px;font-size:8px;line-height:12.0px;transform:scaleY(1.2);transform-origin:50% 2.94px;width:54px;text-align:center;">2</div>
<div class="a" style="left:60px;top:204px;width:147px;height:30px;overflow:hidden"><div class="a" style="left:2.8px;top:2.53px;font-size:8px;line-height:12.0px;transform:scaleY(1.2);transform-origin:50% 2.94px;font-weight:bold;color:#0d6efd;">Recebimento de amostras de caixas</div></div>
<div class="a" style="left:207.7px;top:206.53px;font-size:8px;line-height:12.0px;transform:scaleY(1.2);transform-origin:50% 2.94px;width:53px;text-align:center;">12/08/2025</div>
<div class="a" style="left:260.7px;top:206.53px;font-size:8px;line-height:12.0px;transform:scaleY(1.2);transform-origin:50% 2.94px;width:54px;text-align:center;">94</div>
<div class="a" style="left:314.7px;top:206.53px;font-size:8px;line-height:12.0px;transform:scaleY(1.2);transform-origin:50% 2.94px;width:54px;text-align:center;">19/12/2025</div>
<div class="a" style="left:369px;top:204px;width:20px;height:30px;overflow:hidden"><div class="a" style="left:0px;top:2.53px;font-size:8px;line-height:12.0px;transform:scaleY(1.2);transform-origin:50% 2.94px;width:20px;text-align:right;">GUS</div></div>
<div class="a" style="left:499px;top:204px;width:19px;height:30px;overflow:hidden"><div class="a" style="left:0px;top:2.53px;font-size:8px;line-height:12.0px;transform:scaleY(1.2);transform-origin:50% 2.94px;letter-spacing:-0.4px;">RAUS</div></div>
<div class="bar" style="left:519px;top:208px;width:94px"></div>
<div class="a" style="left:519px;top:208px;width:7px;height:12px;background:linear-gradient(90deg,rgba(0,0,0,0) 0,rgba(0,0,0,0) 100%)"></div>
<div class="a" style="left:525px;top:208px;width:1px;height:12px;background:#fafafa"></div>
<svg class="a" style="left:519px;top:208px" width="7" height="12" viewBox="0 0 7 12"><path d="M6 0 A6 6 0 0 0 6 12 Q3.8 6 6 0 Z" fill="#28a745"/></svg>
<div class="a" style="left:519px;top:220.82px;font-size:7px;line-height:10.5px;color:#212529;width:95px;text-align:center;">0%</div>
<div class="bar" style="left:620px;top:208px;width:94px"></div>
<div class="a" style="left:620px;top:208px;width:80.6px;height:12px;background:#fafafa"></div>
<div class="a" style="left:620px;top:208px;width:79.6px;height:12px;background:#ffc107;border-radius:6px 0 0 6px"></div>
<div class="a" style="left:623.2px;top:208px;width:1px;height:12px;background:rgba(255,255,255,0.12)"></div>
<div class="a" style="left:620px;top:220.82px;font-size:7px;line-height:10.5px;color:#212529;width:95px;text-align:center;">84%</div>
<div class="a" style="left:717.7px;top:206.53px;font-size:8px;line-height:12.0px;transform:scaleY(1.2);transform-origin:50% 2.94px;width:67px;text-align:center;">Iniciada</div>
<div class="hat" style="left:785px;top:205px;width:16px"></div>
<div class="hat" style="left:802px;top:205px;width:16px"></div>
<div class="hat" style="left:819px;top:205px;width:16px"></div>
<div class="hat" style="left:836px;top:205px;width:15px"></div>
<div class="hat" style="left:852px;top:205px;width:16px"></div>
<div class="hat" style="left:903px;top:205px;width:16px"></div>
<div class="hat" style="left:920px;top:205px;width:15px"></div>
<div class="hat" style="left:936px;top:205px;width:16px"></div>
<div class="hat" style="left:953px;top:205px;width:16px"></div>
<div class="hat" style="left:970px;top:205px;width:16px"></div>
<div class="hat" style="left:1020px;top:205px;width:16px"></div>
<div class="hat" style="left:1037px;top:205px;width:16px"></div>
<div class="hat" style="left:1054px;top:205px;width:16px"></div>
<div class="hat" style="left:1071px;top:205px;width:16px"></div>
<div class="hat" style="left:1088px;top:205px;width:15px"></div>
<div class="hat" style="left:1138px;top:205px;width:16px"></div>
<div class="hat" style="left:1155px;top:205px;width:16px"></div>
<div class="hat" style="left:1172px;top:205px;width:15px"></div>
<div class="hat" style="left:1188px;top:205px;width:16px"></div>
<div class="hat" style="left:1205px;top:205px;width:16px"></div>
<div class="hat" style="left:1256px;top:205px;width:15px"></div>
<div class="hat" style="left:1272px;top:205px;width:16px"></div>
<svg class="a" style="left:26px;top:240.3px" width="6" height="9" viewBox="0 0 6 9"><path d="M1.5 0.5 V6.3 H3.6" fill="none" stroke="#b9b9b9" stroke-width="1.1"/><path d="M3.2 4.6 L5 6.3 L3.2 8" fill="none" stroke="#b9b9b9" stroke-width="0.9"/></svg>
<div class="a" style="left:33.6px;top:236.53px;font-size:8px;line-height:12.0px;transform:scaleY(1.2);transform-origin:50% 2.94px;">3</div>
<div class="a" style="left:60px;top:235px;width:147px;height:30px;overflow:hidden"><div class="a" style="left:2.8px;top:1.53px;font-size:8px;line-height:12.0px;transform:scaleY(1.2);transform-origin:50% 2.94px;font-weight:bold;color:#0d6efd;">Amostras de caixas micras</div></div>
<div class="a" style="left:207.7px;top:236.53px;font-size:8px;line-height:12.0px;transform:scaleY(1.2);transform-origin:50% 2.94px;width:53px;text-align:center;">12/08/2025</div>
<div class="a" style="left:260.7px;top:236.53px;font-size:8px;line-height:12.0px;transform:scaleY(1.2);transform-origin:50% 2.94px;width:54px;text-align:center;">94</div>
<div class="a" style="left:314.7px;top:236.53px;font-size:8px;line-height:12.0px;transform:scaleY(1.2);transform-origin:50% 2.94px;width:54px;text-align:center;">19/12/2025</div>
<div class="bar" style="left:519px;top:238px;width:94px"></div>
<div class="a" style="left:519px;top:238px;width:7px;height:12px;background:linear-gradient(90deg,rgba(0,0,0,0) 0,rgba(0,0,0,0) 100%)"></div>
<div class="a" style="left:525px;top:238px;width:1px;height:12px;background:#fafafa"></div>
<svg class="a" style="left:519px;top:238px" width="7" height="12" viewBox="0 0 7 12"><path d="M6 0 A6 6 0 0 0 6 12 Q3.8 6 6 0 Z" fill="#28a745"/></svg>
<div class="a" style="left:519px;top:250.82px;font-size:7px;line-height:10.5px;color:#212529;width:95px;text-align:center;">0%</div>
<div class="bar" style="left:620px;top:238px;width:94px"></div>
<div class="a" style="left:620px;top:238px;width:80.6px;height:12px;background:#fafafa"></div>
<div class="a" style="left:620px;top:238px;width:79.6px;height:12px;background:#ffc107;border-radius:6px 0 0 6px"></div>
<div class="a" style="left:623.2px;top:238px;width:1px;height:12px;background:rgba(255,255,255,0.12)"></div>
<div class="a" style="left:620px;top:250.82px;font-size:7px;line-height:10.5px;color:#212529;width:95px;text-align:center;">84%</div>
<div class="a" style="left:717.7px;top:236.53px;font-size:8px;line-height:12.0px;transform:scaleY(1.2);transform-origin:50% 2.94px;width:67px;text-align:center;">Iniciada</div>
<div class="hat" style="left:785px;top:236px;width:16px"></div>
<div class="hat" style="left:802px;top:236px;width:16px"></div>
<div class="hat" style="left:819px;top:236px;width:16px"></div>
<div class="hat" style="left:836px;top:236px;width:15px"></div>
<div class="hat" style="left:852px;top:236px;width:16px"></div>
<div class="hat" style="left:903px;top:236px;width:16px"></div>
<div class="hat" style="left:920px;top:236px;width:15px"></div>
<div class="hat" style="left:936px;top:236px;width:16px"></div>
<div class="hat" style="left:953px;top:236px;width:16px"></div>
<div class="hat" style="left:970px;top:236px;width:16px"></div>
<div class="hat" style="left:1020px;top:236px;width:16px"></div>
<div class="hat" style="left:1037px;top:236px;width:16px"></div>
<div class="hat" style="left:1054px;top:236px;width:16px"></div>
<div class="hat" style="left:1071px;top:236px;width:16px"></div>
<div class="hat" style="left:1088px;top:236px;width:15px"></div>
<div class="hat" style="left:1138px;top:236px;width:16px"></div>
<div class="hat" style="left:1155px;top:236px;width:16px"></div>
<div class="hat" style="left:1172px;top:236px;width:15px"></div>
<div class="hat" style="left:1188px;top:236px;width:16px"></div>
<div class="hat" style="left:1205px;top:236px;width:16px"></div>
<div class="hat" style="left:1256px;top:236px;width:15px"></div>
<div class="hat" style="left:1272px;top:236px;width:16px"></div>
<div class="a" style="left:5.7px;top:267.53px;font-size:8px;line-height:12.0px;transform:scaleY(1.2);transform-origin:50% 2.94px;width:54px;text-align:center;">4</div>
<div class="a" style="left:60px;top:265px;width:147px;height:30px;overflow:hidden"><div class="a" style="left:2.8px;top:2.53px;font-size:8px;line-height:12.0px;transform:scaleY(1.2);transform-origin:50% 2.94px;font-weight:bold;color:#0d6efd;">Alteração de Molde - 1562 - corpo/parte</div></div>
<div class="a" style="left:207.7px;top:267.53px;font-size:8px;line-height:12.0px;transform:scaleY(1.2);transform-origin:50% 2.94px;width:53px;text-align:center;">12/08/2025</div>
<div class="a" style="left:260.7px;top:267.53px;font-size:8px;line-height:12.0px;transform:scaleY(1.2);transform-origin:50% 2.94px;width:54px;text-align:center;">36</div>
<div class="a" style="left:314.7px;top:267.53px;font-size:8px;line-height:12.0px;transform:scaleY(1.2);transform-origin:50% 2.94px;width:54px;text-align:center;">30/09/2025</div>
<div class="a" style="left:369px;top:265px;width:20px;height:30px;overflow:hidden"><div class="a" style="left:0px;top:2.53px;font-size:8px;line-height:12.0px;transform:scaleY(1.2);transform-origin:50% 2.94px;width:20px;text-align:right;">J</div></div>
<div class="bar" style="left:519px;top:269px;width:94px"></div>
<div class="a" style="left:519px;top:269px;width:7px;height:12px;background:linear-gradient(90deg,rgba(0,0,0,0) 0,rgba(0,0,0,0) 100%)"></div>
<div class="a" style="left:525px;top:269px;width:1px;height:12px;background:#fafafa"></div>
<svg class="a" style="left:519px;top:269px" width="7" height="12" viewBox="0 0 7 12"><path d="M6 0 A6 6 0 0 0 6 12 Q3.8 6 6 0 Z" fill="#28a745"/></svg>
<div class="a" style="left:519px;top:281.82px;font-size:7px;line-height:10.5px;color:#212529;width:95px;text-align:center;">0%</div>
<div class="bar" style="left:620px;top:269px;width:94px"></div>
<div class="a" style="left:620px;top:269px;width:57.1px;height:12px;background:#fafafa"></div>
<div class="a" style="left:620px;top:269px;width:56.1px;height:12px;background:#28a745;border-radius:6px 0 0 6px"></div>
<div class="a" style="left:623.2px;top:269px;width:1px;height:12px;background:rgba(255,255,255,0.12)"></div>
<div class="a" style="left:620px;top:281.82px;font-size:7px;line-height:10.5px;color:#212529;width:95px;text-align:center;">58%</div>
<div class="a" style="left:717.7px;top:267.53px;font-size:8px;line-height:12.0px;transform:scaleY(1.2);transform-origin:50% 2.94px;width:67px;text-align:center;">A Fazer</div>
<div class="hat" style="left:785px;top:266px;width:16px"></div>
<div class="hat" style="left:802px;top:266px;width:16px"></div>
<div class="hat" style="left:819px;top:266px;width:16px"></div>
<div class="hat" style="left:836px;top:266px;width:15px"></div>
<div class="hat" style="left:852px;top:266px;width:16px"></div>
<div class="hat" style="left:903px;top:266px;width:16px"></div>
<div class="hat" style="left:920px;top:266px;width:15px"></div>
<div class="hat" style="left:936px;top:266px;width:16px"></div>
<div class="hat" style="left:953px;top:266px;width:16px"></div>
<div class="hat" style="left:970px;top:266px;width:16px"></div>
<div class="hat" style="left:1020px;top:266px;width:16px"></div>
<div class="hat" style="left:1037px;top:266px;width:16px"></div>
<div class="hat" style="left:1054px;top:266px;width:16px"></div>
<div class="hat" style="left:1071px;top:266px;width:16px"></div>
<div class="hat" style="left:1088px;top:266px;width:15px"></div>
<div class="hat" style="left:1138px;top:266px;width:16px"></div>
<div class="hat" style="left:1155px;top:266px;width:16px"></div>
<div class="hat" style="left:1172px;top:266px;width:15px"></div>
<div class="hat" style="left:1188px;top:266px;width:16px"></div>
<div class="hat" style="left:1205px;top:266px;width:16px"></div>
<div class="hat" style="left:1256px;top:266px;width:15px"></div>
<div class="hat" style="left:1272px;top:266px;width:16px"></div>
<div class="a" style="left:5.7px;top:297.53px;font-size:8px;line-height:12.0px;transform:scaleY(1.2);transform-origin:50% 2.94px;width:54px;text-align:center;">5</div>
<div class="a" style="left:60px;top:295px;width:147px;height:30px;overflow:hidden"><div class="a" style="left:2.8px;top:2.53px;font-size:8px;line-height:12.0px;transform:scaleY(1.2);transform-origin:50% 2.94px;font-weight:bold;color:#0d6efd;">Fabricação de gabarito</div></div>
<div class="a" style="left:207.7px;top:297.53px;font-size:8px;line-height:12.0px;transform:scaleY(1.2);transform-origin:50% 2.94px;width:53px;text-align:center;">12/08/2025</div>
<div class="a" style="left:260px;top:297.53px;font-size:8px;line-height:12.0px;transform:scaleY(1.2);transform-origin:50% 2.94px;width:27px;text-align:right;">-8</div>
<svg class="a" style="left:288.4px;top:300.4px" width="8" height="8" viewBox="0 0 8 8"><path d="M4 0.6 Q4.3 0.6 4.5 0.9 L7.6 6.6 Q7.8 7.3 7.1 7.3 H0.9 Q0.2 7.3 0.4 6.6 L3.5 0.9 Q3.7 0.6 4 0.6 Z" fill="#e25462"/><rect x="3.5" y="2.8" width="1" height="2.3" fill="#fff" opacity="0.85"/><rect x="3.5" y="5.6" width="1" height="1" fill="#fff" opacity="0.85"/></svg>
<div class="a" style="left:314.7px;top:297.53px;font-size:8px;line-height:12.0px;transform:scaleY(1.2);transform-origin:50% 2.94px;width:54px;text-align:center;">21/08/2025</div>
<div class="bar" style="left:519px;top:299px;width:94px"></div>
<div class="a" style="left:519px;top:299px;width:7px;height:12px;background:linear-gradient(90deg,rgba(0,0,0,0) 0,rgba(0,0,0,0) 100%)"></div>
<div class="a" style="left:525px;top:299px;width:1px;height:12px;background:#fafafa"></div>
<svg class="a" style="left:519px;top:299px" width="7" height="12" viewBox="0 0 7 12"><path d="M6 0 A6 6 0 0 0 6 12 Q3.8 6 6 0 Z" fill="#28a745"/></svg>
<div class="a" style="left:519px;top:311.82px;font-size:7px;line-height:10.5px;color:#212529;width:95px;text-align:center;">0%</div>
<div class="bar" style="left:620px;top:299px;width:94px"></div>
<div class="a" style="left:620px;top:299px;width:7px;height:12px;background:linear-gradient(90deg,rgba(0,0,0,0) 0,rgba(0,0,0,0) 100%)"></div>
<div class="a" style="left:625px;top:299px;width:1px;height:12px;background:#fafafa"></div>
<svg class="a" style="left:620px;top:299px" width="7" height="12" viewBox="0 0 7 12"><path d="M5.4 0 A5.4 6 0 0 0 5.4 12 Q0.9 6 5.4 0 Z" fill="#dc3545"/></svg>
<div class="a" style="left:620px;top:311.82px;font-size:7px;line-height:10.5px;color:#212529;width:95px;text-align:center;">0%</div>
<div class="a" style="left:717.7px;top:297.53px;font-size:8px;line-height:12.0px;transform:scaleY(1.2);transform-origin:50% 2.94px;width:67px;text-align:center;">Atrasada</div>
<div class="a" style="left:5.7px;top:327.53px;font-size:8px;line-height:12.0px;transform:scaleY(1.2);transform-origin:50% 2.94px;width:54px;text-align:center;">6</div>
<div class="a" style="left:60px;top:326px;width:147px;height:30px;overflow:hidden"><div class="a" style="left:2.8px;top:1.53px;font-size:8px;line-height:12.0px;transform:scaleY(1.2);transform-origin:50% 2.94px;font-weight:bold;color:#0d6efd;">Fazer extenção ramificada com 4 terminais</div></div>
<div class="a" style="left:207.7px;top:327.53px;font-size:8px;line-height:12.0px;transform:scaleY(1.2);transform-origin:50% 2.94px;width:53px;text-align:center;">12/08/2025</div>
<div class="a" style="left:260.7px;top:327.53px;font-size:8px;line-height:12.0px;transform:scaleY(1.2);transform-origin:50% 2.94px;width:54px;text-align:center;">24</div>
<div class="a" style="left:314.7px;top:327.53px;font-size:8px;line-height:12.0px;transform:scaleY(1.2);transform-origin:50% 2.94px;width:54px;text-align:center;">12/09/2025</div>
<div class="bar" style="left:519px;top:329px;width:94px"></div>
<div class="a" style="left:519px;top:329px;width:7px;height:12px;background:linear-gradient(90deg,rgba(0,0,0,0) 0,rgba(0,0,0,0) 100%)"></div>
<div class="a" style="left:525px;top:329px;width:1px;height:12px;background:#fafafa"></div>
<svg class="a" style="left:519px;top:329px" width="7" height="12" viewBox="0 0 7 12"><path d="M6 0 A6 6 0 0 0 6 12 Q3.8 6 6 0 Z" fill="#28a745"/></svg>
<div class="a" style="left:519px;top:341.82px;font-size:7px;line-height:10.5px;color:#212529;width:95px;text-align:center;">0%</div>
<div class="bar" style="left:620px;top:329px;width:94px"></div>
<div class="a" style="left:620px;top:329px;width:38.1px;height:12px;background:#fafafa"></div>
<div class="a" style="left:620px;top:329px;width:37.1px;height:12px;background:#28a745;border-radius:6px 0 0 6px"></div>
<div class="a" style="left:623.2px;top:329px;width:1px;height:12px;background:rgba(255,255,255,0.12)"></div>
<div class="a" style="left:620px;top:341.82px;font-size:7px;line-height:10.5px;color:#212529;width:95px;text-align:center;">37%</div>
<div class="a" style="left:717.7px;top:327.53px;font-size:8px;line-height:12.0px;transform:scaleY(1.2);transform-origin:50% 2.94px;width:67px;text-align:center;">A Fazer</div>
<div class="hat" style="left:785px;top:327px;width:16px"></div>
<div class="hat" style="left:802px;top:327px;width:16px"></div>
<div class="hat" style="left:819px;top:327px;width:16px"></div>
<div class="hat" style="left:836px;top:327px;width:15px"></div>
<div class="hat" style="left:852px;top:327px;width:16px"></div>
<div class="hat" style="left:903px;top:327px;width:16px"></div>
<div class="hat" style="left:920px;top:327px;width:15px"></div>
<div class="hat" style="left:936px;top:327px;width:16px"></div>
<div class="hat" style="left:953px;top:327px;width:16px"></div>
<div class="hat" style="left:970px;top:327px;width:16px"></div>
<div class="a" style="left:5.7px;top:358.53px;font-size:8px;line-height:12.0px;transform:scaleY(1.2);transform-origin:50% 2.94px;width:54px;text-align:center;">7</div>
<div class="a" style="left:60px;top:356px;width:147px;height:30px;overflow:hidden"><div class="a" style="left:2.8px;top:2.53px;font-size:8px;line-height:12.0px;transform:scaleY(1.2);transform-origin:50% 2.94px;font-weight:bold;color:#0d6efd;">Alteração de Matéria Prima.</div></div>
<div class="a" style="left:207.7px;top:358.53px;font-size:8px;line-height:12.0px;transform:scaleY(1.2);transform-origin:50% 2.94px;width:53px;text-align:center;">14/08/2025</div>
<div class="a" style="left:260.7px;top:358.53px;font-size:8px;line-height:12.0px;transform:scaleY(1.2);transform-origin:50% 2.94px;width:54px;text-align:center;">44</div>
<div class="a" style="left:314.7px;top:358.53px;font-size:8px;line-height:12.0px;transform:scaleY(1.2);transform-origin:50% 2.94px;width:54px;text-align:center;">14/10/2025</div>
<div class="a" style="left:369px;top:356px;width:20px;height:30px;overflow:hidden"><div class="a" style="left:0px;top:2.53px;font-size:8px;line-height:12.0px;transform:scaleY(1.2);transform-origin:50% 2.94px;width:20px;text-align:right;">RE</div></div>
<div class="a" style="left:499px;top:356px;width:19px;height:30px;overflow:hidden"><div class="a" style="left:0px;top:2.53px;font-size:8px;line-height:12.0px;transform:scaleY(1.2);transform-origin:50% 2.94px;letter-spacing:-0.4px;">O</div></div>
<div class="bar" style="left:519px;top:360px;width:94px"></div>
<div class="a" style="left:519px;top:360px;width:15.0px;height:12px;background:#fafafa"></div>
<div class="a" style="left:519px;top:360px;width:14.0px;height:12px;background:#28a745;border-radius:6px 0 0 6px"></div>
<div class="a" style="left:523.7px;top:360px;width:1px;height:12px;background:rgba(255,255,255,0.12)"></div>
<div class="a" style="left:519px;top:372.82px;font-size:7px;line-height:10.5px;color:#212529;width:95px;text-align:center;">10%</div>
<div class="bar" style="left:620px;top:360px;width:94px"></div>
<div class="a" style="left:620px;top:360px;width:68.0px;height:12px;background:#fafafa"></div>
<div class="a" style="left:620px;top:360px;width:67.0px;height:12px;background:#ffc107;border-radius:6px 0 0 6px"></div>
<div class="a" style="left:623.2px;top:360px;width:1px;height:12px;background:rgba(255,255,255,0.12)"></div>
<div class="a" style="left:620px;top:372.82px;font-size:7px;line-height:10.5px;color:#212529;width:95px;text-align:center;">70%</div>
<div class="a" style="left:717.7px;top:358.53px;font-size:8px;line-height:12.0px;transform:scaleY(1.2);transform-origin:50% 2.94px;width:67px;text-align:center;">Iniciada</div>
<div class="hat" style="left:785px;top:357px;width:16px"></div>
<div class="hat" style="left:802px;top:357px;width:16px"></div>
<div class="hat" style="left:819px;top:357px;width:16px"></div>
<div class="hat" style="left:836px;top:357px;width:15px"></div>
<div class="hat" style="left:852px;top:357px;width:16px"></div>
<div class="hat" style="left:903px;top:357px;width:16px"></div>
<div class="hat" style="left:920px;top:357px;width:15px"></div>
<div class="hat" style="left:936px;top:357px;width:16px"></div>
<div class="hat" style="left:953px;top:357px;width:16px"></div>
<div class="hat" style="left:970px;top:357px;width:16px"></div>
<div class="hat" style="left:1020px;top:357px;width:16px"></div>
<div class="hat" style="left:1037px;top:357px;width:16px"></div>
<div class="hat" style="left:1054px;top:357px;width:16px"></div>
<div class="hat" style="left:1071px;top:357px;width:16px"></div>
<div class="hat" style="left:1088px;top:357px;width:15px"></div>
<div class="hat" style="left:1138px;top:357px;width:16px"></div>
<div class="hat" style="left:1155px;top:357px;width:16px"></div>
<div class="hat" style="left:1172px;top:357px;width:15px"></div>
<div class="hat" style="left:1188px;top:357px;width:16px"></div>
<div class="hat" style="left:1205px;top:357px;width:16px"></div>
<div class="hat" style="left:1256px;top:357px;width:15px"></div>
<div class="hat" style="left:1272px;top:357px;width:16px"></div>
<svg class="a" style="left:26px;top:391.3px" width="6" height="9" viewBox="0 0 6 9"><path d="M1.5 0.5 V6.3 H3.6" fill="none" stroke="#b9b9b9" stroke-width="1.1"/><path d="M3.2 4.6 L5 6.3 L3.2 8" fill="none" stroke="#b9b9b9" stroke-width="0.9"/></svg>
<div class="a" style="left:33.6px;top:388.53px;font-size:8px;line-height:12.0px;transform:scaleY(1.2);transform-origin:50% 2.94px;">8</div>
<div class="a" style="left:60px;top:386px;width:147px;height:30px;overflow:hidden"><div class="a" style="left:2.8px;top:2.53px;font-size:8px;line-height:12.0px;transform:scaleY(1.2);transform-origin:50% 2.94px;font-weight:bold;color:#0d6efd;">Regulamentação</div></div>
<div class="a" style="left:207.7px;top:388.53px;font-size:8px;line-height:12.0px;transform:scaleY(1.2);transform-origin:50% 2.94px;width:53px;text-align:center;">21/08/2025</div>
<div class="a" style="left:260.7px;top:388.53px;font-size:8px;line-height:12.0px;transform:scaleY(1.2);transform-origin:50% 2.94px;width:54px;text-align:center;">39</div>
<div class="a" style="left:314.7px;top:388.53px;font-size:8px;line-height:12.0px;transform:scaleY(1.2);transform-origin:50% 2.94px;width:54px;text-align:center;">14/10/2025</div>
<div class="bar" style="left:519px;top:390px;width:94px"></div>
<div class="a" style="left:519px;top:390px;width:24.0px;height:12px;background:#fafafa"></div>
<div class="a" style="left:519px;top:390px;width:23.0px;height:12px;background:#28a745;border-radius:6px 0 0 6px"></div>
<div class="a" style="left:523.7px;top:390px;width:1px;height:12px;background:rgba(255,255,255,0.12)"></div>
<div class="a" style="left:519px;top:402.82px;font-size:7px;line-height:10.5px;color:#212529;width:95px;text-align:center;">20%</div>
<div class="bar" style="left:620px;top:390px;width:94px"></div>
<div class="a" style="left:620px;top:390px;width:76.1px;height:12px;background:#fafafa"></div>
<div class="a" style="left:620px;top:390px;width:75.1px;height:12px;background:#ffc107;border-radius:6px 0 0 6px"></div>
<div class="a" style="left:623.2px;top:390px;width:1px;height:12px;background:rgba(255,255,255,0.12)"></div>
<div class="a" style="left:620px;top:402.82px;font-size:7px;line-height:10.5px;color:#212529;width:95px;text-align:center;">79%</div>
<div class="a" style="left:717.7px;top:388.53px;font-size:8px;line-height:12.0px;transform:scaleY(1.2);transform-origin:50% 2.94px;width:67px;text-align:center;">Iniciada</div>
<div class="hat" style="left:785px;top:387px;width:16px"></div>
<div class="hat" style="left:802px;top:387px;width:16px"></div>
<div class="hat" style="left:819px;top:387px;width:16px"></div>
<div class="hat" style="left:836px;top:387px;width:15px"></div>
<div class="hat" style="left:852px;top:387px;width:16px"></div>
<div class="hat" style="left:903px;top:387px;width:16px"></div>
<div class="hat" style="left:920px;top:387px;width:15px"></div>
<div class="hat" style="left:936px;top:387px;width:16px"></div>
<div class="hat" style="left:953px;top:387px;width:16px"></div>
<div class="hat" style="left:970px;top:387px;width:16px"></div>
<div class="hat" style="left:1020px;top:387px;width:16px"></div>
<div class="hat" style="left:1037px;top:387px;width:16px"></div>
<div class="hat" style="left:1054px;top:387px;width:16px"></div>
<div class="hat" style="left:1071px;top:387px;width:16px"></div>
<div class="hat" style="left:1088px;top:387px;width:15px"></div>
<div class="hat" style="left:1138px;top:387px;width:16px"></div>
<div class="hat" style="left:1155px;top:387px;width:16px"></div>
<div class="hat" style="left:1172px;top:387px;width:15px"></div>
<div class="hat" style="left:1188px;top:387px;width:16px"></div>
<div class="hat" style="left:1205px;top:387px;width:16px"></div>
<div class="hat" style="left:1256px;top:387px;width:15px"></div>
<div class="hat" style="left:1272px;top:387px;width:16px"></div>
<div class="a" style="left:785px;top:402px;width:16px;height:14px;background:#28a745"></div>
<div class="a" style="left:5.7px;top:418.53px;font-size:8px;line-height:12.0px;transform:scaleY(1.2);transform-origin:50% 2.94px;width:54px;text-align:center;">9</div>
<div class="a" style="left:60px;top:416px;width:147px;height:30px;overflow:hidden"><div class="a" style="left:2.8px;top:2.53px;font-size:8px;line-height:12.0px;transform:scaleY(1.2);transform-origin:50% 2.94px;font-weight:bold;color:#0d6efd;">Fazer base com roletes para manipulação</div></div>
<div class="a" style="left:207.7px;top:418.53px;font-size:8px;line-height:12.0px;transform:scaleY(1.2);transform-origin:50% 2.94px;width:53px;text-align:center;">18/08/2025</div>
<div class="a" style="left:260px;top:418.53px;font-size:8px;line-height:12.0px;transform:scaleY(1.2);transform-origin:50% 2.94px;width:27px;text-align:right;">-2</div>
<svg class="a" style="left:288.4px;top:421.4px" width="8" height="8" viewBox="0 0 8 8"><path d="M4 0.6 Q4.3 0.6 4.5 0.9 L7.6 6.6 Q7.8 7.3 7.1 7.3 H0.9 Q0.2 7.3 0.4 6.6 L3.5 0.9 Q3.7 0.6 4 0.6 Z" fill="#e25462"/><rect x="3.5" y="2.8" width="1" height="2.3" fill="#fff" opacity="0.85"/><rect x="3.5" y="5.6" width="1" height="1" fill="#fff" opacity="0.85"/></svg>
<div class="a" style="left:314.7px;top:418.53px;font-size:8px;line-height:12.0px;transform:scaleY(1.2);transform-origin:50% 2.94px;width:54px;text-align:center;">29/08/2025</div>
<div class="a" style="left:369px;top:416px;width:20px;height:30px;overflow:hidden"><div class="a" style="left:0px;top:2.53px;font-size:8px;line-height:12.0px;transform:scaleY(1.2);transform-origin:50% 2.94px;width:20px;text-align:right;">BR</div></div>
<div class="a" style="left:499px;top:416px;width:19px;height:30px;overflow:hidden"><div class="a" style="left:0px;top:2.53px;font-size:8px;line-height:12.0px;transform:scaleY(1.2);transform-origin:50% 2.94px;letter-spacing:-0.4px;">S</div></div>
<div class="bar" style="left:519px;top:420px;width:94px"></div>
<div class="a" style="left:519px;top:420px;width:7px;height:12px;background:linear-gradient(90deg,rgba(0,0,0,0) 0,rgba(0,0,0,0) 100%)"></div>
<div class="a" style="left:525px;top:420px;width:1px;height:12px;background:#fafafa"></div>
<svg class="a" style="left:519px;top:420px" width="7" height="12" viewBox="0 0 7 12"><path d="M6 0 A6 6 0 0 0 6 12 Q3.8 6 6 0 Z" fill="#28a745"/></svg>
<div class="a" style="left:519px;top:432.82px;font-size:7px;line-height:10.5px;color:#212529;width:95px;text-align:center;">0%</div>
<div class="bar" style="left:620px;top:420px;width:94px"></div>
<div class="a" style="left:620px;top:420px;width:7px;height:12px;background:linear-gradient(90deg,rgba(0,0,0,0) 0,rgba(0,0,0,0) 100%)"></div>
<div class="a" style="left:625px;top:420px;width:1px;height:12px;background:#fafafa"></div>
<svg class="a" style="left:620px;top:420px" width="7" height="12" viewBox="0 0 7 12"><path d="M5.4 0 A5.4 6 0 0 0 5.4 12 Q0.9 6 5.4 0 Z" fill="#dc3545"/></svg>
<div class="a" style="left:620px;top:432.82px;font-size:7px;line-height:10.5px;color:#212529;width:95px;text-align:center;">0%</div>
<div class="a" style="left:717.7px;top:418.53px;font-size:8px;line-height:12.0px;transform:scaleY(1.2);transform-origin:50% 2.94px;width:67px;text-align:center;">Atrasada</div>
<div class="a" style="left:5.7px;top:448.53px;font-size:8px;line-height:12.0px;transform:scaleY(1.2);transform-origin:50% 2.94px;width:54px;text-align:center;">10</div>
<div class="a" style="left:60px;top:447px;width:147px;height:30px;overflow:hidden"><div class="a" style="left:2.8px;top:1.53px;font-size:8px;line-height:12.0px;transform:scaleY(1.2);transform-origin:50% 2.94px;font-weight:bold;color:#0d6efd;">Instalação de tubulação nas calhas do setor</div></div>
<div class="a" style="left:207.7px;top:448.53px;font-size:8px;line-height:12.0px;transform:scaleY(1.2);transform-origin:50% 2.94px;width:53px;text-align:center;">20/08/2025</div>
<div class="a" style="left:260.7px;top:448.53px;font-size:8px;line-height:12.0px;transform:scaleY(1.2);transform-origin:50% 2.94px;width:54px;text-align:center;">30</div>
<div class="a" style="left:314.7px;top:448.53px;font-size:8px;line-height:12.0px;transform:scaleY(1.2);transform-origin:50% 2.94px;width:54px;text-align:center;">30/09/2025</div>
<div class="a" style="left:369px;top:447px;width:20px;height:30px;overflow:hidden"><div class="a" style="left:0px;top:1.53px;font-size:8px;line-height:12.0px;transform:scaleY(1.2);transform-origin:50% 2.94px;width:20px;text-align:right;">BR</div></div>
<div class="a" style="left:499px;top:447px;width:19px;height:30px;overflow:hidden"><div class="a" style="left:0px;top:1.53px;font-size:8px;line-height:12.0px;transform:scaleY(1.2);transform-origin:50% 2.94px;letter-spacing:-0.4px;">S</div></div>
<div class="bar" style="left:519px;top:450px;width:94px"></div>
<div class="a" style="left:519px;top:450px;width:7px;height:12px;background:linear-gradient(90deg,rgba(0,0,0,0) 0,rgba(0,0,0,0) 100%)"></div>
<div class="a" style="left:525px;top:450px;width:1px;height:12px;background:#fafafa"></div>
<svg class="a" style="left:519px;top:450px" width="7" height="12" viewBox="0 0 7 12"><path d="M6 0 A6 6 0 0 0 6 12 Q3.8 6 6 0 Z" fill="#28a745"/></svg>
<div class="a" style="left:519px;top:462.82px;font-size:7px;line-height:10.5px;color:#212529;width:95px;text-align:center;">0%</div>
<div class="bar" style="left:620px;top:450px;width:94px"></div>
<div class="a" style="left:620px;top:450px;width:68.0px;height:12px;background:#fafafa"></div>
<div class="a" style="left:620px;top:450px;width:67.0px;height:12px;background:#ffc107;border-radius:6px 0 0 6px"></div>
<div class="a" style="left:623.2px;top:450px;width:1px;height:12px;background:rgba(255,255,255,0.12)"></div>
<div class="a" style="left:620px;top:462.82px;font-size:7px;line-height:10.5px;color:#212529;width:95px;text-align:center;">70%</div>
<div class="a" style="left:717.7px;top:448.53px;font-size:8px;line-height:12.0px;transform:scaleY(1.2);transform-origin:50% 2.94px;width:67px;text-align:center;">Iniciada</div>
<div class="hat" style="left:785px;top:448px;width:16px"></div>
<div class="hat" style="left:802px;top:448px;width:16px"></div>
<div class="hat" style="left:819px;top:448px;width:16px"></div>
<div class="hat" style="left:836px;top:448px;width:15px"></div>
<div class="hat" style="left:852px;top:448px;width:16px"></div>
<div class="hat" style="left:903px;top:448px;width:16px"></div>
<div class="hat" style="left:920px;top:448px;width:15px"></div>
<div class="hat" style="left:936px;top:448px;width:16px"></div>
<div class="hat" style="left:953px;top:448px;width:16px"></div>
<div class="hat" style="left:970px;top:448px;width:16px"></div>
<div class="hat" style="left:1020px;top:448px;width:16px"></div>
<div class="hat" style="left:1037px;top:448px;width:16px"></div>
<div class="hat" style="left:1054px;top:448px;width:16px"></div>
<div class="hat" style="left:1071px;top:448px;width:16px"></div>
<div class="hat" style="left:1088px;top:448px;width:15px"></div>
<div class="hat" style="left:1138px;top:448px;width:16px"></div>
<div class="hat" style="left:1155px;top:448px;width:16px"></div>
<div class="hat" style="left:1172px;top:448px;width:15px"></div>
<div class="hat" style="left:1188px;top:448px;width:16px"></div>
<div class="hat" style="left:1205px;top:448px;width:16px"></div>
<div class="hat" style="left:1256px;top:448px;width:15px"></div>
<div class="hat" style="left:1272px;top:448px;width:16px"></div>
<div class="a" style="left:5.7px;top:479.53px;font-size:8px;line-height:12.0px;transform:scaleY(1.2);transform-origin:50% 2.94px;width:54px;text-align:center;">11</div>
<div class="a" style="left:60px;top:477px;width:147px;height:30px;overflow:hidden"><div class="a" style="left:2.8px;top:2.53px;font-size:8px;line-height:12.0px;transform:scaleY(1.2);transform-origin:50% 2.94px;font-weight:bold;color:#0d6efd;">teste</div></div>
<div class="a" style="left:207.7px;top:479.53px;font-size:8px;line-height:12.0px;transform:scaleY(1.2);transform-origin:50% 2.94px;width:53px;text-align:center;">19/08/2025</div>
<div class="a" style="left:260px;top:479.53px;font-size:8px;line-height:12.0px;transform:scaleY(1.2);transform-origin:50% 2.94px;width:27px;text-align:right;">-7</div>
<svg class="a" style="left:288.4px;top:482.4px" width="8" height="8" viewBox="0 0 8 8"><path d="M4 0.6 Q4.3 0.6 4.5 0.9 L7.6 6.6 Q7.8 7.3 7.1 7.3 H0.9 Q0.2 7.3 0.4 6.6 L3.5 0.9 Q3.7 0.6 4 0.6 Z" fill="#e25462"/><rect x="3.5" y="2.8" width="1" height="2.3" fill="#fff" opacity="0.85"/><rect x="3.5" y="5.6" width="1" height="1" fill="#fff" opacity="0.85"/></svg>
<div class="a" style="left:314.7px;top:479.53px;font-size:8px;line-height:12.0px;transform:scaleY(1.2);transform-origin:50% 2.94px;width:54px;text-align:center;">22/08/2025</div>
<div class="bar" style="left:519px;top:481px;width:94px"></div>
<div class="a" style="left:519px;top:481px;width:7px;height:12px;background:linear-gradient(90deg,rgba(0,0,0,0) 0,rgba(0,0,0,0) 100%)"></div>
<div class="a" style="left:525px;top:481px;width:1px;height:12px;background:#fafafa"></div>
<svg class="a" style="left:519px;top:481px" width="7" height="12" viewBox="0 0 7 12"><path d="M6 0 A6 6 0 0 0 6 12 Q3.8 6 6 0 Z" fill="#28a745"/></svg>
<div class="a" style="left:519px;top:493.82px;font-size:7px;line-height:10.5px;color:#212529;width:95px;text-align:center;">0%</div>
<div class="bar" style="left:620px;top:481px;width:94px"></div>
<div class="a" style="left:620px;top:481px;width:7px;height:12px;background:linear-gradient(90deg,rgba(0,0,0,0) 0,rgba(0,0,0,0) 100%)"></div>
<div class="a" style="left:625px;top:481px;width:1px;height:12px;background:#fafafa"></div>
<svg class="a" style="left:620px;top:481px" width="7" height="12" viewBox="0 0 7 12"><path d="M5.4 0 A5.4 6 0 0 0 5.4 12 Q0.9 6 5.4 0 Z" fill="#dc3545"/></svg>
<div class="a" style="left:620px;top:493.82px;font-size:7px;line-height:10.5px;color:#212529;width:95px;text-align:center;">0%</div>
<div class="a" style="left:717.7px;top:479.53px;font-size:8px;line-height:12.0px;transform:scaleY(1.2);transform-origin:50% 2.94px;width:67px;text-align:center;">Atrasada</div>
<div class="a" style="left:5.7px;top:509.53px;font-size:8px;line-height:12.0px;transform:scaleY(1.2);transform-origin:50% 2.94px;width:54px;text-align:center;">12</div>
<div class="a" style="left:60px;top:507px;width:147px;height:30px;overflow:hidden"><div class="a" style="left:2.8px;top:2.53px;font-size:8px;line-height:12.0px;transform:scaleY(1.2);transform-origin:50% 2.94px;font-weight:bold;color:#0d6efd;">teste</div></div>
<div class="a" style="left:207.7px;top:509.53px;font-size:8px;line-height:12.0px;transform:scaleY(1.2);transform-origin:50% 2.94px;width:53px;text-align:center;">20/08/2025</div>
<div class="a" style="left:260px;top:509.53px;font-size:8px;line-height:12.0px;transform:scaleY(1.2);transform-origin:50% 2.94px;width:27px;text-align:right;">-8</div>
<svg class="a" style="left:288.4px;top:512.4px" width="8" height="8" viewBox="0 0 8 8"><path d="M4 0.6 Q4.3 0.6 4.5 0.9 L7.6 6.6 Q7.8 7.3 7.1 7.3 H0.9 Q0.2 7.3 0.4 6.6 L3.5 0.9 Q3.7 0.6 4 0.6 Z" fill="#e25462"/><rect x="3.5" y="2.8" width="1" height="2.3" fill="#fff" opacity="0.85"/><rect x="3.5" y="5.6" width="1" height="1" fill="#fff" opacity="0.85"/></svg>
<div class="a" style="left:314.7px;top:509.53px;font-size:8px;line-height:12.0px;transform:scaleY(1.2);transform-origin:50% 2.94px;width:54px;text-align:center;">21/08/2025</div>
<div class="bar" style="left:519px;top:511px;width:94px"></div>
<div class="a" style="left:519px;top:511px;width:7px;height:12px;background:linear-gradient(90deg,rgba(0,0,0,0) 0,rgba(0,0,0,0) 100%)"></div>
<div class="a" style="left:525px;top:511px;width:1px;height:12px;background:#fafafa"></div>
<svg class="a" style="left:519px;top:511px" width="7" height="12" viewBox="0 0 7 12"><path d="M6 0 A6 6 0 0 0 6 12 Q3.8 6 6 0 Z" fill="#28a745"/></svg>
<div class="a" style="left:519px;top:523.82px;font-size:7px;line-height:10.5px;color:#212529;width:95px;text-align:center;">0%</div>
<div class="bar" style="left:620px;top:511px;width:94px"></div>
<div class="a" style="left:620px;top:511px;width:7px;height:12px;background:linear-gradient(90deg,rgba(0,0,0,0) 0,rgba(0,0,0,0) 100%)"></div>
<div class="a" style="left:625px;top:511px;width:1px;height:12px;background:#fafafa"></div>
<svg class="a" style="left:620px;top:511px" width="7" height="12" viewBox="0 0 7 12"><path d="M5.4 0 A5.4 6 0 0 0 5.4 12 Q0.9 6 5.4 0 Z" fill="#dc3545"/></svg>
<div class="a" style="left:620px;top:523.82px;font-size:7px;line-height:10.5px;color:#212529;width:95px;text-align:center;">0%</div>
<div class="a" style="left:717.7px;top:509.53px;font-size:8px;line-height:12.0px;transform:scaleY(1.2);transform-origin:50% 2.94px;width:67px;text-align:center;">Atrasada</div>
<div class="a" style="left:5.7px;top:539.53px;font-size:8px;line-height:12.0px;transform:scaleY(1.2);transform-origin:50% 2.94px;width:54px;text-align:center;">13</div>
<div class="a" style="left:60px;top:538px;width:147px;height:30px;overflow:hidden"><div class="a" style="left:2.8px;top:1.53px;font-size:8px;line-height:12.0px;transform:scaleY(1.2);transform-origin:50% 2.94px;font-weight:bold;color:#0d6efd;">teste (Cópia)</div></div>
<div class="a" style="left:207.7px;top:539.53px;font-size:8px;line-height:12.0px;transform:scaleY(1.2);transform-origin:50% 2.94px;width:53px;text-align:center;">19/08/2025</div>
<div class="a" style="left:260px;top:539.53px;font-size:8px;line-height:12.0px;transform:scaleY(1.2);transform-origin:50% 2.94px;width:27px;text-align:right;">-7</div>
<svg class="a" style="left:288.4px;top:543.4px" width="8" height="8" viewBox="0 0 8 8"><path d="M4 0.6 Q4.3 0.6 4.5 0.9 L7.6 6.6 Q7.8 7.3 7.1 7.3 H0.9 Q0.2 7.3 0.4 6.6 L3.5 0.9 Q3.7 0.6 4 0.6 Z" fill="#e25462"/><rect x="3.5" y="2.8" width="1" height="2.3" fill="#fff" opacity="0.85"/><rect x="3.5" y="5.6" width="1" height="1" fill="#fff" opacity="0.85"/></svg>
<div class="a" style="left:314.7px;top:539.53px;font-size:8px;line-height:12.0px;transform:scaleY(1.2);transform-origin:50% 2.94px;width:54px;text-align:center;">22/08/2025</div>
<div class="bar" style="left:519px;top:541px;width:94px"></div>
<div class="a" style="left:519px;top:541px;width:7px;height:12px;background:linear-gradient(90deg,rgba(0,0,0,0) 0,rgba(0,0,0,0) 100%)"></div>
<div class="a" style="left:525px;top:541px;width:1px;height:12px;background:#fafafa"></div>
<svg class="a" style="left:519px;top:541px" width="7" height="12" viewBox="0 0 7 12"><path d="M6 0 A6 6 0 0 0 6 12 Q3.8 6 6 0 Z" fill="#28a745"/></svg>
<div class="a" style="left:519px;top:553.82px;font-size:7px;line-height:10.5px;color:#212529;width:95px;text-align:center;">0%</div>
<div class="bar" style="left:620px;top:541px;width:94px"></div>
<div class="a" style="left:620px;top:541px;width:7px;height:12px;background:linear-gradient(90deg,rgba(0,0,0,0) 0,rgba(0,0,0,0) 100%)"></div>
<div class="a" style="left:625px;top:541px;width:1px;height:12px;background:#fafafa"></div>
<svg class="a" style="left:620px;top:541px" width="7" height="12" viewBox="0 0 7 12"><path d="M5.4 0 A5.4 6 0 0 0 5.4 12 Q0.9 6 5.4 0 Z" fill="#dc3545"/></svg>
<div class="a" style="left:620px;top:553.82px;font-size:7px;line-height:10.5px;color:#212529;width:95px;text-align:center;">0%</div>
<div class="a" style="left:717.7px;top:539.53px;font-size:8px;line-height:12.0px;transform:scaleY(1.2);transform-origin:50% 2.94px;width:67px;text-align:center;">Atrasada</div>
<div class="a" style="left:5.7px;top:570.53px;font-size:8px;line-height:12.0px;transform:scaleY(1.2);transform-origin:50% 2.94px;width:54px;text-align:center;">14</div>
<div class="a" style="left:60px;top:568px;width:147px;height:30px;overflow:hidden"><div class="a" style="left:2.8px;top:2.53px;font-size:8px;line-height:12.0px;transform:scaleY(1.2);transform-origin:50% 2.94px;font-weight:bold;color:#0d6efd;">EMBALAGEM GUITARRA ROCK STAR</div></div>
<div class="a" style="left:207.7px;top:570.53px;font-size:8px;line-height:12.0px;transform:scaleY(1.2);transform-origin:50% 2.94px;width:53px;text-align:center;">21/08/2025</div>
<div class="a" style="left:260.7px;top:570.53px;font-size:8px;line-height:12.0px;transform:scaleY(1.2);transform-origin:50% 2.94px;width:54px;text-align:center;">9</div>
<div class="a" style="left:314.7px;top:570.53px;font-size:8px;line-height:12.0px;transform:scaleY(1.2);transform-origin:50% 2.94px;width:54px;text-align:center;">02/09/2025</div>
<div class="a" style="left:369px;top:568px;width:20px;height:30px;overflow:hidden"><div class="a" style="left:0px;top:2.53px;font-size:8px;line-height:12.0px;transform:scaleY(1.2);transform-origin:50% 2.94px;width:20px;text-align:right;">LISI</div></div>
<div class="a" style="left:499px;top:568px;width:19px;height:30px;overflow:hidden"><div class="a" style="left:0px;top:2.53px;font-size:8px;line-height:12.0px;transform:scaleY(1.2);transform-origin:50% 2.94px;letter-spacing:-0.4px;">WS</div></div>
<div class="bar" style="left:519px;top:572px;width:94px"></div>
<div class="a" style="left:519px;top:572px;width:7px;height:12px;background:linear-gradient(90deg,rgba(0,0,0,0) 0,rgba(0,0,0,0) 100%)"></div>
<div class="a" style="left:525px;top:572px;width:1px;height:12px;background:#fafafa"></div>
<svg class="a" style="left:519px;top:572px" width="7" height="12" viewBox="0 0 7 12"><path d="M6 0 A6 6 0 0 0 6 12 Q3.8 6 6 0 Z" fill="#28a745"/></svg>
<div class="a" style="left:519px;top:584.82px;font-size:7px;line-height:10.5px;color:#212529;width:95px;text-align:center;">0%</div>
<div class="bar" style="left:620px;top:572px;width:94px"></div>
<div class="a" style="left:620px;top:572px;width:14.6px;height:12px;background:#fafafa"></div>
<div class="a" style="left:620px;top:572px;width:13.6px;height:12px;background:#ffc107;border-radius:6px 0 0 6px"></div>
<div class="a" style="left:623.2px;top:572px;width:1px;height:12px;background:rgba(255,255,255,0.12)"></div>
<div class="a" style="left:620px;top:584.82px;font-size:7px;line-height:10.5px;color:#212529;width:95px;text-align:center;">11%</div>
<div class="a" style="left:717.7px;top:570.53px;font-size:8px;line-height:12.0px;transform:scaleY(1.2);transform-origin:50% 2.94px;width:67px;text-align:center;">Iniciada</div>
<div class="hat" style="left:785px;top:569px;width:16px"></div>
<div class="hat" style="left:802px;top:569px;width:16px"></div>
<div class="a" style="left:5.7px;top:600.53px;font-size:8px;line-height:12.0px;transform:scaleY(1.2);transform-origin:50% 2.94px;width:54px;text-align:center;">15</div>
<div class="a" style="left:60px;top:598px;width:147px;height:30px;overflow:hidden"><div class="a" style="left:2.8px;top:2.53px;font-size:8px;line-height:12.0px;transform:scaleY(1.2);transform-origin:50% 2.94px;font-weight:bold;color:#0d6efd;">32000494T - Caixa Micra Ref. 750 Logística</div></div>
<div class="a" style="left:207.7px;top:600.53px;font-size:8px;line-height:12.0px;transform:scaleY(1.2);transform-origin:50% 2.94px;width:53px;text-align:center;">21/08/2025</div>
<div class="a" style="left:260.7px;top:600.53px;font-size:8px;line-height:12.0px;transform:scaleY(1.2);transform-origin:50% 2.94px;width:54px;text-align:center;">22</div>
<div class="a" style="left:314.7px;top:600.53px;font-size:8px;line-height:12.0px;transform:scaleY(1.2);transform-origin:50% 2.94px;width:54px;text-align:center;">21/09/2025</div>
<div class="a" style="left:369px;top:598px;width:20px;height:30px;overflow:hidden"><div class="a" style="left:0px;top:2.53px;font-size:8px;line-height:12.0px;transform:scaleY(1.2);transform-origin:50% 2.94px;width:20px;text-align:right;">P</div></div>
<div class="a" style="left:499px;top:598px;width:19px;height:30px;overflow:hidden"><div class="a" style="left:0px;top:2.53px;font-size:8px;line-height:12.0px;transform:scaleY(1.2);transform-origin:50% 2.94px;letter-spacing:-0.4px;">O</div></div>
<div class="bar" style="left:519px;top:602px;width:94px"></div>
<div class="a" style="left:519px;top:602px;width:7px;height:12px;background:linear-gradient(90deg,rgba(0,0,0,0) 0,rgba(0,0,0,0) 100%)"></div>
<div class="a" style="left:525px;top:602px;width:1px;height:12px;background:#fafafa"></div>
<svg class="a" style="left:519px;top:602px" width="7" height="12" viewBox="0 0 7 12"><path d="M6 0 A6 6 0 0 0 6 12 Q3.8 6 6 0 Z" fill="#28a745"/></svg>
<div class="a" style="left:519px;top:614.82px;font-size:7px;line-height:10.5px;color:#212529;width:95px;text-align:center;">0%</div>
<div class="bar" style="left:620px;top:602px;width:94px"></div>
<div class="a" style="left:620px;top:602px;width:62.5px;height:12px;background:#fafafa"></div>
<div class="a" style="left:620px;top:602px;width:61.5px;height:12px;background:#28a745;border-radius:6px 0 0 6px"></div>
<div class="a" style="left:623.2px;top:602px;width:1px;height:12px;background:rgba(255,255,255,0.12)"></div>
<div class="a" style="left:620px;top:614.82px;font-size:7px;line-height:10.5px;color:#212529;width:95px;text-align:center;">64%</div>
<div class="a" style="left:717.7px;top:600.53px;font-size:8px;line-height:12.0px;transform:scaleY(1.2);transform-origin:50% 2.94px;width:67px;text-align:center;">A Fazer</div>
<div class="hat" style="left:785px;top:599px;width:16px"></div>
<div class="hat" style="left:802px;top:599px;width:16px"></div>
<div class="hat" style="left:819px;top:599px;width:16px"></div>
<div class="hat" style="left:836px;top:599px;width:15px"></div>
<div class="hat" style="left:852px;top:599px;width:16px"></div>
<div class="hat" style="left:903px;top:599px;width:16px"></div>
<div class="hat" style="left:920px;top:599px;width:15px"></div>
<div class="hat" style="left:936px;top:599px;width:16px"></div>
<div class="hat" style="left:953px;top:599px;width:16px"></div>
<div class="hat" style="left:970px;top:599px;width:16px"></div>
<div class="hat" style="left:1020px;top:599px;width:16px"></div>
<div class="hat" style="left:1037px;top:599px;width:16px"></div>
<div class="hat" style="left:1054px;top:599px;width:16px"></div>
<div class="hat" style="left:1071px;top:599px;width:16px"></div>
<div class="hat" style="left:1088px;top:599px;width:15px"></div>
<div class="a" style="left:5.7px;top:630.53px;font-size:8px;line-height:12.0px;transform:scaleY(1.2);transform-origin:50% 2.94px;width:54px;text-align:center;">16</div>
<div class="a" style="left:60px;top:629px;width:147px;height:30px;overflow:hidden"><div class="a" style="left:2.8px;top:1.53px;font-size:8px;line-height:12.0px;transform:scaleY(1.2);transform-origin:50% 2.94px;font-weight:bold;color:#0d6efd;">NR-12 PRENSA DE RODA Nº 06</div></div>
<div class="a" style="left:207.7px;top:630.53px;font-size:8px;line-height:12.0px;transform:scaleY(1.2);transform-origin:50% 2.94px;width:53px;text-align:center;">22/08/2025</div>
<div class="a" style="left:260px;top:630.53px;font-size:8px;line-height:12.0px;transform:scaleY(1.2);transform-origin:50% 2.94px;width:27px;text-align:right;">-2</div>
<svg class="a" style="left:288.4px;top:634.4px" width="8" height="8" viewBox="0 0 8 8"><path d="M4 0.6 Q4.3 0.6 4.5 0.9 L7.6 6.6 Q7.8 7.3 7.1 7.3 H0.9 Q0.2 7.3 0.4 6.6 L3.5 0.9 Q3.7 0.6 4 0.6 Z" fill="#e25462"/><rect x="3.5" y="2.8" width="1" height="2.3" fill="#fff" opacity="0.85"/><rect x="3.5" y="5.6" width="1" height="1" fill="#fff" opacity="0.85"/></svg>
<div class="a" style="left:314.7px;top:630.53px;font-size:8px;line-height:12.0px;transform:scaleY(1.2);transform-origin:50% 2.94px;width:54px;text-align:center;">29/08/2025</div>
<div class="bar" style="left:519px;top:632px;width:94px"></div>
<div class="a" style="left:519px;top:632px;width:7px;height:12px;background:linear-gradient(90deg,rgba(0,0,0,0) 0,rgba(0,0,0,0) 100%)"></div>
<div class="a" style="left:525px;top:632px;width:1px;height:12px;background:#fafafa"></div>
<svg class="a" style="left:519px;top:632px" width="7" height="12" viewBox="0 0 7 12"><path d="M6 0 A6 6 0 0 0 6 12 Q3.8 6 6 0 Z" fill="#28a745"/></svg>
<div class="a" style="left:519px;top:644.82px;font-size:7px;line-height:10.5px;color:#212529;width:95px;text-align:center;">0%</div>
<div class="bar" style="left:620px;top:632px;width:94px"></div>
<div class="a" style="left:620px;top:632px;width:7px;height:12px;background:linear-gradient(90deg,rgba(0,0,0,0) 0,rgba(0,0,0,0) 100%)"></div>
<div class="a" style="left:625px;top:632px;width:1px;height:12px;background:#fafafa"></div>
<svg class="a" style="left:620px;top:632px" width="7" height="12" viewBox="0 0 7 12"><path d="M5.4 0 A5.4 6 0 0 0 5.4 12 Q0.9 6 5.4 0 Z" fill="#dc3545"/></svg>
<div class="a" style="left:620px;top:644.82px;font-size:7px;line-height:10.5px;color:#212529;width:95px;text-align:center;">0%</div>
<div class="a" style="left:717.7px;top:630.53px;font-size:8px;line-height:12.0px;transform:scaleY(1.2);transform-origin:50% 2.94px;width:67px;text-align:center;">Atrasada</div>
<div class="a" style="left:5.7px;top:661.53px;font-size:8px;line-height:12.0px;transform:scaleY(1.2);transform-origin:50% 2.94px;width:54px;text-align:center;">17</div>
<div class="a" style="left:60px;top:659px;width:147px;height:30px;overflow:hidden"><div class="a" style="left:2.8px;top:2.53px;font-size:8px;line-height:12.0px;transform:scaleY(1.2);transform-origin:50% 2.94px;font-weight:bold;color:#0d6efd;">32000368T - Caixa Micra -Ref. 888/889</div></div>
<div class="a" style="left:207.7px;top:661.53px;font-size:8px;line-height:12.0px;transform:scaleY(1.2);transform-origin:50% 2.94px;width:53px;text-align:center;">22/08/2025</div>
<div class="a" style="left:260.7px;top:661.53px;font-size:8px;line-height:12.0px;transform:scaleY(1.2);transform-origin:50% 2.94px;width:54px;text-align:center;">71</div>
<div class="a" style="left:314.7px;top:661.53px;font-size:8px;line-height:12.0px;transform:scaleY(1.2);transform-origin:50% 2.94px;width:54px;text-align:center;">28/11/2025</div>
<div class="a" style="left:369px;top:659px;width:20px;height:30px;overflow:hidden"><div class="a" style="left:0px;top:2.53px;font-size:8px;line-height:12.0px;transform:scaleY(1.2);transform-origin:50% 2.94px;width:20px;text-align:right;">P</div></div>
<div class="a" style="left:499px;top:659px;width:19px;height:30px;overflow:hidden"><div class="a" style="left:0px;top:2.53px;font-size:8px;line-height:12.0px;transform:scaleY(1.2);transform-origin:50% 2.94px;letter-spacing:-0.4px;">O</div></div>
<div class="bar" style="left:519px;top:663px;width:94px"></div>
<div class="a" style="left:519px;top:663px;width:7px;height:12px;background:linear-gradient(90deg,rgba(0,0,0,0) 0,rgba(0,0,0,0) 100%)"></div>
<div class="a" style="left:525px;top:663px;width:1px;height:12px;background:#fafafa"></div>
<svg class="a" style="left:519px;top:663px" width="7" height="12" viewBox="0 0 7 12"><path d="M6 0 A6 6 0 0 0 6 12 Q3.8 6 6 0 Z" fill="#28a745"/></svg>
<div class="a" style="left:519px;top:675.82px;font-size:7px;line-height:10.5px;color:#212529;width:95px;text-align:center;">0%</div>
<div class="bar" style="left:620px;top:663px;width:94px"></div>
<div class="a" style="left:620px;top:663px;width:86.0px;height:12px;background:#fafafa"></div>
<div class="a" style="left:620px;top:663px;width:85.0px;height:12px;background:#28a745;border-radius:6px 0 0 6px"></div>
<div class="a" style="left:623.2px;top:663px;width:1px;height:12px;background:rgba(255,255,255,0.12)"></div>
<div class="a" style="left:620px;top:675.82px;font-size:7px;line-height:10.5px;color:#212529;width:95px;text-align:center;">90%</div>
<div class="a" style="left:717.7px;top:661.53px;font-size:8px;line-height:12.0px;transform:scaleY(1.2);transform-origin:50% 2.94px;width:67px;text-align:center;">A Fazer</div>
<div class="hat" style="left:785px;top:660px;width:16px"></div>
<div class="hat" style="left:802px;top:660px;width:16px"></div>
<div class="hat" style="left:819px;top:660px;width:16px"></div>
<div class="hat" style="left:836px;top:660px;width:15px"></div>
<div class="hat" style="left:852px;top:660px;width:16px"></div>
<div class="hat" style="left:903px;top:660px;width:16px"></div>
<div class="hat" style="left:920px;top:660px;width:15px"></div>
<div class="hat" style="left:936px;top:660px;width:16px"></div>
<div class="hat" style="left:953px;top:660px;width:16px"></div>
<div class="hat" style="left:970px;top:660px;width:16px"></div>
<div class="hat" style="left:1020px;top:660px;width:16px"></div>
<div class="hat" style="left:1037px;top:660px;width:16px"></div>
<div class="hat" style="left:1054px;top:660px;width:16px"></div>
<div class="hat" style="left:1071px;top:660px;width:16px"></div>
<div class="hat" style="left:1088px;top:660px;width:15px"></div>
<div class="hat" style="left:1138px;top:660px;width:16px"></div>
<div class="hat" style="left:1155px;top:660px;width:16px"></div>
<div class="hat" style="left:1172px;top:660px;width:15px"></div>
<div class="hat" style="left:1188px;top:660px;width:16px"></div>
<div class="hat" style="left:1205px;top:660px;width:16px"></div>
<div class="hat" style="left:1256px;top:660px;width:15px"></div>
<div class="hat" style="left:1272px;top:660px;width:16px"></div>
<div class="hat" style="left:785px;top:690px;width:16px"></div>
<div class="hat" style="left:802px;top:690px;width:16px"></div>
<div class="hat" style="left:819px;top:690px;width:16px"></div>
<div class="hat" style="left:836px;top:690px;width:15px"></div>
<div class="hat" style="left:852px;top:690px;width:16px"></div>
<div class="hat" style="left:903px;top:690px;width:16px"></div>
<div class="hat" style="left:920px;top:690px;width:15px"></div>
<div class="hat" style="left:936px;top:690px;width:16px"></div>
<div class="a" style="left:260.5px;top:422px;width:1px;height:5px;background:rgba(13,110,253,0.55)"></div>
<div class="a" style="left:314.5px;top:453px;width:1px;height:5px;background:rgba(13,110,253,0.55)"></div>
<div class="a" style="left:260.5px;top:665px;width:1px;height:5px;background:rgba(13,110,253,0.55)"></div>
<div class="a" style="left:314.5px;top:665px;width:1px;height:5px;background:rgba(13,110,253,0.55)"></div>
<div class="a" style="left:368.5px;top:665px;width:1px;height:5px;background:rgba(13,110,253,0.55)"></div>
<div class="a" style="left:389px;top:169px;width:111px;height:506px;background:#00a9f1;border:4px solid #000"></div>
</body></html>
